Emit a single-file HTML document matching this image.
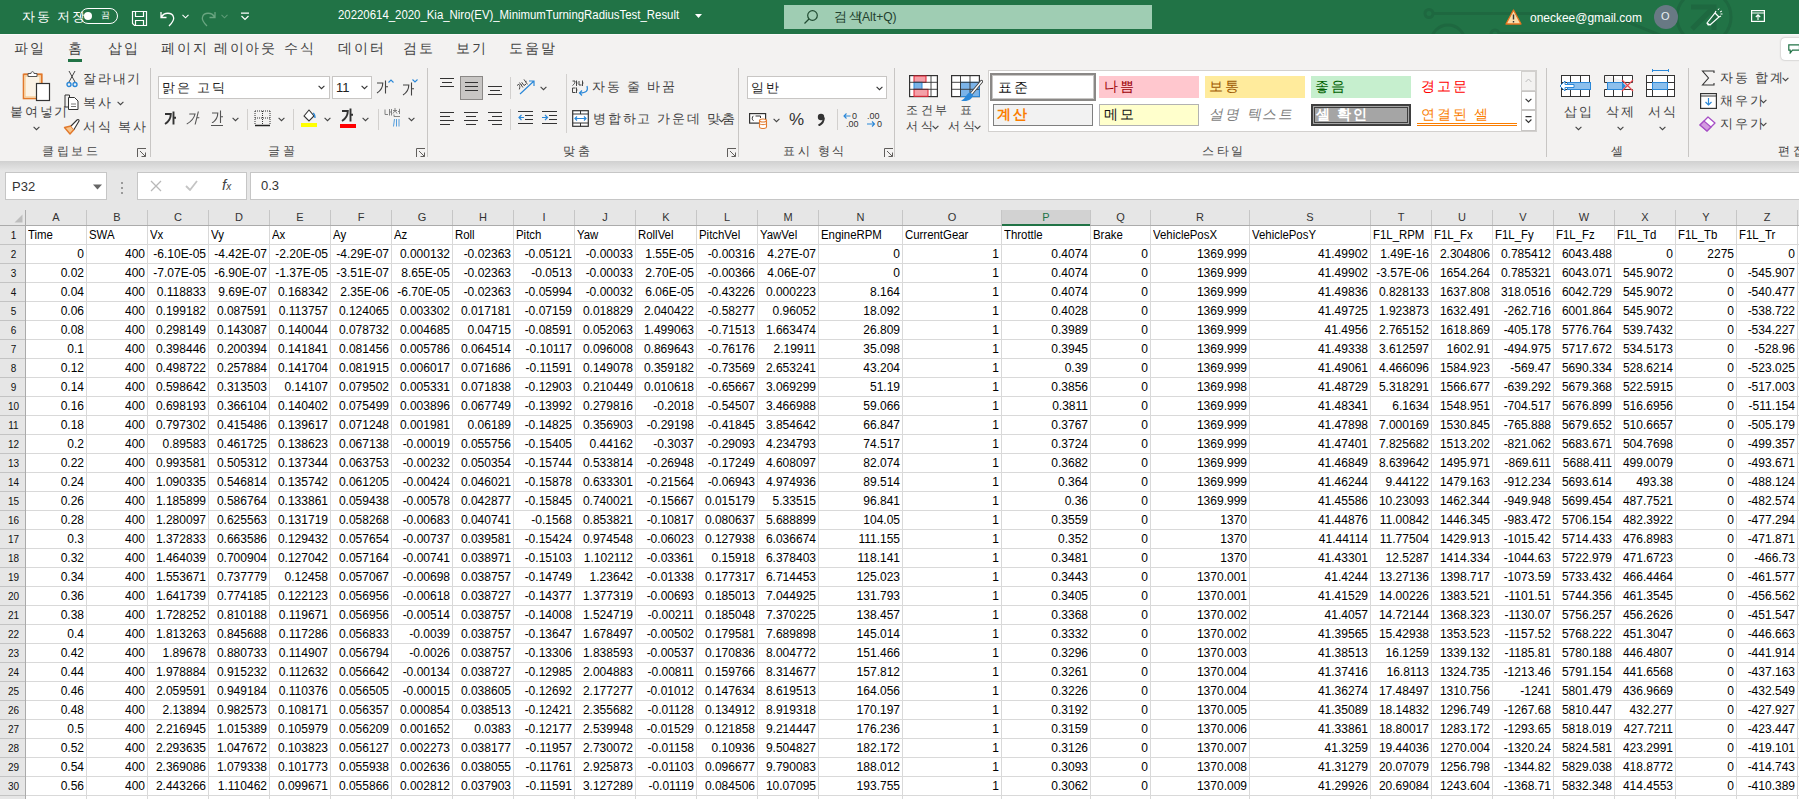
<!DOCTYPE html><html><head><meta charset="utf-8"><style>
*{margin:0;padding:0;box-sizing:border-box}
html,body{width:1799px;height:799px;overflow:hidden;background:#e6e6e6;font-family:"Liberation Sans",sans-serif}
.r{position:absolute}
.t{position:absolute;white-space:nowrap;line-height:1;}
.g{position:absolute;white-space:nowrap;font-size:12px;line-height:18px;height:18px;color:#000;overflow:hidden}
.gr{text-align:right;padding-right:2px}
.gl{text-align:left;padding-left:2px}
</style></head><body><div class="r" style="left:0px;top:0px;width:1799px;height:34px;background:#217346"></div>
<svg class="r" style="left:1400px;top:0px;" width="399" height="34" viewBox="0 0 399 34"><g stroke="#1e6840" stroke-width="3" fill="none">
<circle cx="29" cy="13.5" r="4"/><path d="M33 13.5 H207 L262 36"/>
<circle cx="48" cy="42" r="17"/>
<circle cx="95" cy="34" r="4"/><path d="M99 33.5 H200"/>
<circle cx="304" cy="17" r="27"/>
</g><g stroke="#1e6840" stroke-width="5" fill="none"><path d="M291 7 H314 V30 M292 29 L312 9"/></g></svg>
<div class="t" style="left:22px;top:10px;font-size:13px;color:#fff;letter-spacing:1.75px;">자동 저장</div>
<div class="r" style="left:80px;top:8px;width:38px;height:16px;border:1px solid #fff;border-radius:8px"></div>
<div class="r" style="left:84px;top:12px;width:8px;height:8px;background:#fff;border-radius:50%"></div>
<div class="t" style="left:101px;top:11px;font-size:9px;color:#fff;letter-spacing:2.5px;">끔</div>
<svg class="r" style="left:131px;top:10px;" width="17" height="17" viewBox="0 0 17 17"><path d="M1.5 1.5 H15.5 V15.5 H3.5 L1.5 13.5 Z M4.5 1.5 V6.5 H12.5 V1.5 M4.5 15.5 V10.5 H12.5 V15.5" fill="none" stroke="#fff" stroke-width="1.2"/></svg>
<svg class="r" style="left:159px;top:9px;" width="18" height="18" viewBox="0 0 18 18"><path d="M2 3 V8.5 H7.5 M2.5 8 C5 3 13 3 14.5 8 C15.5 11 13 14 10 17" fill="none" stroke="#fff" stroke-width="1.3"/></svg>
<svg class="r" style="left:182px;top:14px;" width="7" height="5" viewBox="0 0 7 5"><path d="M0.5 0.8 L3.5 3.8 L6.5 0.8" fill="none" stroke="#fff" stroke-width="1.1"/></svg>
<svg class="r" style="left:199px;top:9px;" width="18" height="18" viewBox="0 0 18 18"><path d="M16 3 V8.5 H10.5 M15.5 8 C13 3 5 3 3.5 8 C2.5 11 5 14 8 17" fill="none" stroke="#6aa581" stroke-width="1.3"/></svg>
<svg class="r" style="left:221px;top:14px;" width="7" height="5" viewBox="0 0 7 5"><path d="M0.5 0.8 L3.5 3.8 L6.5 0.8" fill="none" stroke="#5d9b76" stroke-width="1.1"/></svg>
<svg class="r" style="left:240px;top:12px;" width="10" height="9" viewBox="0 0 10 9"><path d="M1 1.2 H9 M1.5 4 L5 7.5 L8.5 4" fill="none" stroke="#fff" stroke-width="1.2"/></svg>
<div class="t" style="left:338px;top:9px;font-size:12.5px;color:#fff;transform:scaleX(0.912);transform-origin:0 0;">20220614_2020_Kia_Niro(EV)_MinimumTurningRadiusTest_Result</div>
<svg class="r" style="left:695px;top:14px;" width="8" height="5" viewBox="0 0 8 5"><path d="M0 0 H7 L3.5 4 Z" fill="#fff"/></svg>
<div class="r" style="left:784px;top:5px;width:368px;height:24px;background:#9fcdb3"></div>
<svg class="r" style="left:803px;top:9px;" width="16" height="16" viewBox="0 0 16 16"><circle cx="9.5" cy="6.5" r="4.8" fill="none" stroke="#1f4a30" stroke-width="1.2"/><path d="M6 10 L1.5 14.5" stroke="#1f4a30" stroke-width="1.3"/></svg>
<div class="t" style="left:834px;top:10px;font-size:13px;color:#23412f;letter-spacing:1.75px;">검색</div>
<div class="t" style="left:858px;top:10px;font-size:13px;color:#23412f;transform:scaleX(0.93);transform-origin:0 0;">(Alt+Q)</div>
<svg class="r" style="left:1505px;top:9px;" width="17" height="16" viewBox="0 0 17 16"><path d="M8.5 1 L16 15 H1 Z" fill="#fbdca8" stroke="#e8741f" stroke-width="1.3" stroke-linejoin="round"/><path d="M8.5 5.5 V10.5 M8.5 12 V13.5" stroke="#333" stroke-width="1.4"/></svg>
<div class="t" style="left:1530px;top:11px;font-size:13px;color:#fff;transform:scaleX(0.921);transform-origin:0 0;">oneckee@gmail.com</div>
<div class="r" style="left:1654px;top:5px;width:24px;height:24px;background:#687984;border-radius:50%"></div>
<div class="t" style="left:1661px;top:11px;font-size:11px;color:#e8eef2;">O</div>
<svg class="r" style="left:1704px;top:8px;" width="20" height="20" viewBox="0 0 20 20"><path d="M3 15 L11 5 L15 9 L6 17 Z M4.5 17.5 L3 15 M11 5 L12 3 M15 9 L17 8" fill="none" stroke="#fff" stroke-width="1.2"/><path d="M14 2 L15 0.5 M16 4 L18 3 M16.5 6 L18.5 6" stroke="#fff" stroke-width="1"/></svg>
<svg class="r" style="left:1751px;top:10px;" width="14" height="12" viewBox="0 0 14 12"><rect x="0.6" y="0.6" width="12.8" height="10.8" fill="none" stroke="#fff" stroke-width="1.2"/><path d="M0.6 3 H13.4 M7 10 V5 M4.8 7 L7 4.8 L9.2 7" fill="none" stroke="#fff" stroke-width="1.1"/></svg>
<div class="r" style="left:0px;top:34px;width:1799px;height:127px;background:#f3f2f1"></div>
<div class="r" style="left:0px;top:34px;width:1799px;height:1px;background:#fbfafa"></div>
<div class="t" style="left:14px;top:41px;font-size:14px;color:#444;letter-spacing:1.75px;">파일</div>
<div class="t" style="left:68px;top:41px;font-size:14px;color:#444;letter-spacing:1.75px;">홈</div>
<div class="t" style="left:108px;top:41px;font-size:14px;color:#444;letter-spacing:1.75px;">삽입</div>
<div class="t" style="left:161px;top:41px;font-size:14px;color:#444;letter-spacing:1.75px;">페이지 레이아웃</div>
<div class="t" style="left:284px;top:41px;font-size:14px;color:#444;letter-spacing:1.75px;">수식</div>
<div class="t" style="left:338px;top:41px;font-size:14px;color:#444;letter-spacing:1.75px;">데이터</div>
<div class="t" style="left:403px;top:41px;font-size:14px;color:#444;letter-spacing:1.75px;">검토</div>
<div class="t" style="left:456px;top:41px;font-size:14px;color:#444;letter-spacing:1.75px;">보기</div>
<div class="t" style="left:509px;top:41px;font-size:14px;color:#444;letter-spacing:1.75px;">도움말</div>
<div class="r" style="left:68px;top:59px;width:14px;height:3px;background:#217346"></div>
<div class="r" style="left:1781px;top:38px;width:30px;height:22px;background:#fff;border-radius:4px;box-shadow:0 0 2px rgba(0,0,0,.35)"></div>
<svg class="r" style="left:1788px;top:44px;" width="12" height="10" viewBox="0 0 12 10"><path d="M0.8 0.8 H11.5 V6.2 H4.5 L2.2 9 V6.2 H0.8 Z" fill="none" stroke="#217346" stroke-width="1.2"/></svg>
<div class="r" style="left:150px;top:68px;width:1px;height:89px;background:#c8c6c4"></div>
<div class="r" style="left:427px;top:68px;width:1px;height:89px;background:#c8c6c4"></div>
<div class="r" style="left:738px;top:68px;width:1px;height:89px;background:#c8c6c4"></div>
<div class="r" style="left:894px;top:68px;width:1px;height:89px;background:#c8c6c4"></div>
<div class="r" style="left:1546px;top:68px;width:1px;height:89px;background:#c8c6c4"></div>
<div class="r" style="left:1688px;top:68px;width:1px;height:89px;background:#c8c6c4"></div>
<div class="t" style="left:42px;top:145px;font-size:12px;color:#444;letter-spacing:2.5px;">클립보드</div>
<div class="t" style="left:268px;top:145px;font-size:12px;color:#444;letter-spacing:2.5px;">글꼴</div>
<div class="t" style="left:563px;top:145px;font-size:12px;color:#444;letter-spacing:2.5px;">맞춤</div>
<div class="t" style="left:783px;top:145px;font-size:12px;color:#444;letter-spacing:2.5px;">표시 형식</div>
<div class="t" style="left:1202px;top:145px;font-size:12px;color:#444;letter-spacing:2.5px;">스타일</div>
<div class="t" style="left:1611px;top:145px;font-size:12px;color:#444;letter-spacing:2.5px;">셀</div>
<div class="t" style="left:1778px;top:145px;font-size:12px;color:#444;letter-spacing:2.5px;">편집</div>
<svg class="r" style="left:137px;top:148px;" width="10" height="10" viewBox="0 0 10 10"><path d="M0.5 9 V0.5 H9 M3 3 L8.5 8.5 M4.5 8.5 H8.5 V4.5" fill="none" stroke="#605e5c" stroke-width="1"/></svg>
<svg class="r" style="left:416px;top:148px;" width="10" height="10" viewBox="0 0 10 10"><path d="M0.5 9 V0.5 H9 M3 3 L8.5 8.5 M4.5 8.5 H8.5 V4.5" fill="none" stroke="#605e5c" stroke-width="1"/></svg>
<svg class="r" style="left:727px;top:148px;" width="10" height="10" viewBox="0 0 10 10"><path d="M0.5 9 V0.5 H9 M3 3 L8.5 8.5 M4.5 8.5 H8.5 V4.5" fill="none" stroke="#605e5c" stroke-width="1"/></svg>
<svg class="r" style="left:884px;top:148px;" width="10" height="10" viewBox="0 0 10 10"><path d="M0.5 9 V0.5 H9 M3 3 L8.5 8.5 M4.5 8.5 H8.5 V4.5" fill="none" stroke="#605e5c" stroke-width="1"/></svg>
<svg class="r" style="left:20px;top:70px;" width="34" height="33" viewBox="0 0 34 33"><path d="M3.5 4.5 H8 M17 4.5 H21.5 V13" fill="none" stroke="#e1792c" stroke-width="2"/>
<rect x="3.5" y="4.5" width="18" height="24" fill="#fff" stroke="#e1792c" stroke-width="1.6"/>
<rect x="5" y="6" width="15" height="21" fill="#fbf3e6" stroke="#f5c27d" stroke-width="1"/>
<path d="M8 6.5 V3.5 H11 C11 1 14 1 14 3.5 H17 V6.5 Z" fill="#fff" stroke="#555" stroke-width="1"/>
<rect x="16.5" y="13.5" width="13" height="17" fill="#fff" stroke="#333" stroke-width="1.2"/></svg>
<div class="t" style="left:10px;top:105px;font-size:13px;color:#444;letter-spacing:1.75px;">붙여넣기</div>
<svg class="r" style="left:33px;top:126px;" width="7" height="5" viewBox="0 0 7 5"><path d="M0.6 0.8 L3.5 3.7 L6.4 0.8" fill="none" stroke="#444" stroke-width="1.1"/></svg>
<svg class="r" style="left:66px;top:70px;" width="12" height="18" viewBox="0 0 12 18"><path d="M3 1 L9 12 M9 1 L3 12" stroke="#444" stroke-width="1"/><circle cx="3" cy="14.5" r="2" fill="none" stroke="#2b88d8" stroke-width="1.4"/><circle cx="9" cy="14.5" r="2" fill="none" stroke="#2b88d8" stroke-width="1.4"/></svg>
<div class="t" style="left:83px;top:72px;font-size:13px;color:#444;letter-spacing:1.75px;">잘라내기</div>
<svg class="r" style="left:63px;top:94px;" width="17" height="17" viewBox="0 0 17 17"><path d="M6.5 3 V1 H2 V13 H5" fill="none" stroke="#333" stroke-width="1"/><path d="M5.5 3.5 H11.5 L15 7 V15.5 H5.5 Z" fill="#fff" stroke="#333" stroke-width="1"/><path d="M8 10 H13 M8 12.5 H13" stroke="#555" stroke-width="0.8"/></svg>
<div class="t" style="left:83px;top:96px;font-size:13px;color:#444;letter-spacing:1.75px;">복사</div>
<svg class="r" style="left:117px;top:101px;" width="7" height="5" viewBox="0 0 7 5"><path d="M0.6 0.8 L3.5 3.7 L6.4 0.8" fill="none" stroke="#444" stroke-width="1.1"/></svg>
<svg class="r" style="left:63px;top:118px;" width="18" height="17" viewBox="0 0 18 17"><path d="M1.5 9.5 L8 8 L11 11.5 L7 16 Z" fill="#f8c58c" stroke="#e1792c" stroke-width="1.4" stroke-linejoin="round"/><path d="M8 8 L14 2 C15 1 16.5 2 16 3 L11 11.5" fill="#fff" stroke="#333" stroke-width="1.1"/></svg>
<div class="t" style="left:83px;top:120px;font-size:13px;color:#444;letter-spacing:1.75px;">서식 복사</div>
<div class="r" style="left:158px;top:76px;width:172px;height:23px;background:#fff;border:1px solid #c8c6c4"></div>
<div class="t" style="left:162px;top:81px;font-size:13px;color:#222;letter-spacing:1.75px;">맑은 고딕</div>
<svg class="r" style="left:318px;top:85px;" width="7" height="5" viewBox="0 0 7 5"><path d="M0.6 0.8 L3.5 3.7 L6.4 0.8" fill="none" stroke="#333" stroke-width="1.1"/></svg>
<div class="r" style="left:332px;top:76px;width:40px;height:23px;background:#fff;border:1px solid #c8c6c4"></div>
<div class="t" style="left:336px;top:81px;font-size:13px;color:#222;">11</div>
<svg class="r" style="left:361px;top:85px;" width="7" height="5" viewBox="0 0 7 5"><path d="M0.6 0.8 L3.5 3.7 L6.4 0.8" fill="none" stroke="#333" stroke-width="1.1"/></svg>
<svg class="r" style="left:376px;top:80px;" width="12" height="14" viewBox="0 0 12 14"><g fill="none" stroke="#444" stroke-width="1.1"><path d="M1 3 H6.8 C6.8 7.5 5 10.5 1 13"/><path d="M9.5 0.5 V13.5 M9.5 6.8 H12"/></g></svg>
<svg class="r" style="left:388px;top:79px;" width="6" height="4" viewBox="0 0 6 4"><path d="M0.5 3.5 L3 1 L5.5 3.5" fill="none" stroke="#2b88d8" stroke-width="1.1"/></svg>
<svg class="r" style="left:402px;top:82px;" width="12" height="14" viewBox="0 0 12 14"><g fill="none" stroke="#444" stroke-width="1.1"><path d="M1 3 H6.8 C6.8 7.5 5 10.5 1 13"/><path d="M9.5 0.5 V13.5 M9.5 6.8 H12"/></g></svg>
<svg class="r" style="left:412px;top:79px;" width="6" height="4" viewBox="0 0 6 4"><path d="M0.5 0.5 L3 3 L5.5 0.5" fill="none" stroke="#2b88d8" stroke-width="1.1"/></svg>
<svg class="r" style="left:164px;top:111px;" width="12" height="14" viewBox="0 0 12 14"><g fill="none" stroke="#333" stroke-width="1.9"><path d="M1 3 H6.8 C6.8 7.5 5 10.5 1 13"/><path d="M9.5 0.5 V13.5 M9.5 6.8 H12"/></g></svg>
<svg class="r" style="left:186px;top:111px;" width="14" height="14" viewBox="0 0 14 14"><g fill="none" stroke="#555" stroke-width="1.1" transform="skewX(-14) translate(3 0)"><path d="M1 3 H6.8 C6.8 7.5 5 10.5 1 13"/><path d="M9.5 0.5 V13.5 M9.5 6.8 H12"/></g></svg>
<svg class="r" style="left:211px;top:110px;" width="12" height="13" viewBox="0 0 12 13"><g fill="none" stroke="#555" stroke-width="1.1"><path d="M1 3 H6.8 C6.8 7.5 5 10.5 1 13"/><path d="M9.5 0.5 V13.5 M9.5 6.8 H12"/></g></svg>
<div class="r" style="left:211px;top:125px;width:12px;height:1px;background:#555"></div>
<svg class="r" style="left:232px;top:117px;" width="7" height="5" viewBox="0 0 7 5"><path d="M0.6 0.8 L3.5 3.7 L6.4 0.8" fill="none" stroke="#444" stroke-width="1.1"/></svg>
<div class="r" style="left:247px;top:109px;width:1px;height:21px;background:#d2d0ce"></div>
<svg class="r" style="left:254px;top:110px;" width="17" height="17" viewBox="0 0 17 17"><path d="M1 1 H16 M1 1 V15 M16 1 V15 M8.5 1 V15 M1 8 H16" fill="none" stroke="#333" stroke-width="1" stroke-dasharray="1 1"/><path d="M1 15.5 H16" stroke="#222" stroke-width="1.5"/></svg>
<svg class="r" style="left:278px;top:117px;" width="7" height="5" viewBox="0 0 7 5"><path d="M0.6 0.8 L3.5 3.7 L6.4 0.8" fill="none" stroke="#444" stroke-width="1.1"/></svg>
<div class="r" style="left:293px;top:109px;width:1px;height:21px;background:#d2d0ce"></div>
<svg class="r" style="left:300px;top:107px;" width="18" height="21" viewBox="0 0 18 21"><path d="M4 9 L9 3 L14 9 L9 14 Z" fill="#fff" stroke="#333" stroke-width="1.1"/><path d="M13 6 C15 7 15 9 15 11" fill="none" stroke="#2b88d8" stroke-width="1.3"/><rect x="1" y="16" width="16" height="4" fill="#ffff00"/></svg>
<svg class="r" style="left:324px;top:117px;" width="7" height="5" viewBox="0 0 7 5"><path d="M0.6 0.8 L3.5 3.7 L6.4 0.8" fill="none" stroke="#444" stroke-width="1.1"/></svg>
<svg class="r" style="left:341px;top:108px;" width="14" height="15" viewBox="0 0 14 15"><g fill="none" stroke="#333" stroke-width="1.9"><path d="M1 3 H6.8 C6.8 7.5 5 10.5 1 13"/><path d="M9.5 0.5 V13.5 M9.5 6.8 H12"/></g></svg>
<div class="r" style="left:340px;top:124px;width:16px;height:4px;background:#ff0000"></div>
<svg class="r" style="left:362px;top:117px;" width="7" height="5" viewBox="0 0 7 5"><path d="M0.6 0.8 L3.5 3.7 L6.4 0.8" fill="none" stroke="#444" stroke-width="1.1"/></svg>
<div class="r" style="left:378px;top:109px;width:1px;height:21px;background:#d2d0ce"></div>
<svg class="r" style="left:384px;top:108px;" width="18" height="20" viewBox="0 0 18 20"><g fill="none" stroke="#777" stroke-width="0.9"><path d="M1 1.5 V6.5 H4 M5.5 1 V7.5 M7.5 1 V7.5 M5.5 4 H7.5"/><path d="M10 1 H12 M9 2.5 H13 M11 2.5 L9 5.5 M11 2.5 L13 5.5 M15.5 0.8 V6 M14 3.5 H15.5 M10 6.5 V8.5 H16"/></g><path d="M10.5 11 L9.5 18.5 M12.5 11 V18.5 M15 11 V18.5" fill="none" stroke="#2b88d8" stroke-width="0.8"/></svg>
<svg class="r" style="left:408px;top:117px;" width="7" height="5" viewBox="0 0 7 5"><path d="M0.6 0.8 L3.5 3.7 L6.4 0.8" fill="none" stroke="#444" stroke-width="1.1"/></svg>
<svg class="r" style="left:440px;top:78px;" width="16" height="16" viewBox="0 0 16 16"><rect x="0" y="0" width="14" height="1" fill="#333"/><rect x="2" y="4" width="10" height="1" fill="#333"/><rect x="0" y="8" width="14" height="1" fill="#333"/></svg>
<div class="r" style="left:460px;top:76px;width:23px;height:24px;background:#c8c6c4;border:1px solid #8a8886"></div>
<svg class="r" style="left:465px;top:82px;" width="16" height="16" viewBox="0 0 16 16"><rect x="0" y="0" width="13" height="1" fill="#333"/><rect x="0" y="4" width="13" height="1" fill="#333"/><rect x="0" y="8" width="13" height="1" fill="#333"/></svg>
<svg class="r" style="left:488px;top:86px;" width="16" height="16" viewBox="0 0 16 16"><rect x="0" y="0" width="14" height="1" fill="#333"/><rect x="2" y="4" width="10" height="1" fill="#333"/><rect x="0" y="8" width="14" height="1" fill="#333"/></svg>
<div class="r" style="left:510px;top:77px;width:1px;height:22px;background:#d2d0ce"></div>
<svg class="r" style="left:517px;top:78px;" width="20" height="18" viewBox="0 0 20 18"><g transform="rotate(-35 6 7)" fill="none" stroke="#444" stroke-width="0.9"><path d="M0.5 4 H3 C3 6 2.5 7 0.5 8.5 M4.5 3 V9 M4.5 6 H5.5 M6.5 4 V8 H9 M10 3 V9 M10 6 H11"/></g><path d="M3 16 L17 3 M12 3 H17 V8" fill="none" stroke="#2b88d8" stroke-width="1.2"/></svg>
<svg class="r" style="left:540px;top:86px;" width="7" height="5" viewBox="0 0 7 5"><path d="M0.6 0.8 L3.5 3.7 L6.4 0.8" fill="none" stroke="#444" stroke-width="1.1"/></svg>
<div class="r" style="left:566px;top:74px;width:1px;height:59px;background:#d2d0ce"></div>
<svg class="r" style="left:440px;top:112px;" width="16" height="16" viewBox="0 0 16 16"><rect x="0" y="0" width="14" height="1" fill="#333"/><rect x="0" y="4" width="10" height="1" fill="#333"/><rect x="0" y="8" width="14" height="1" fill="#333"/><rect x="0" y="12" width="10" height="1" fill="#333"/></svg>
<svg class="r" style="left:464px;top:112px;" width="16" height="16" viewBox="0 0 16 16"><rect x="0" y="0" width="14" height="1" fill="#333"/><rect x="2" y="4" width="10" height="1" fill="#333"/><rect x="0" y="8" width="14" height="1" fill="#333"/><rect x="2" y="12" width="10" height="1" fill="#333"/></svg>
<svg class="r" style="left:488px;top:112px;" width="16" height="16" viewBox="0 0 16 16"><rect x="0" y="0" width="14" height="1" fill="#333"/><rect x="4" y="4" width="10" height="1" fill="#333"/><rect x="0" y="8" width="14" height="1" fill="#333"/><rect x="4" y="12" width="10" height="1" fill="#333"/></svg>
<div class="r" style="left:510px;top:109px;width:1px;height:21px;background:#d2d0ce"></div>
<svg class="r" style="left:518px;top:111px;" width="16" height="15" viewBox="0 0 16 15"><path d="M0 0.5 H15 M7 4.5 H15 M7 8.5 H15 M0 12.5 H15" stroke="#333" stroke-width="1"/><path d="M6 6.5 H1 M3.5 4 L1 6.5 L3.5 9" fill="none" stroke="#2b88d8" stroke-width="1.2"/></svg>
<svg class="r" style="left:542px;top:111px;" width="16" height="15" viewBox="0 0 16 15"><path d="M0 0.5 H15 M7 4.5 H15 M7 8.5 H15 M0 12.5 H15" stroke="#333" stroke-width="1"/><path d="M0 6.5 H5.5 M3 4 L5.5 6.5 L3 9" fill="none" stroke="#2b88d8" stroke-width="1.2"/></svg>
<svg class="r" style="left:572px;top:80px;" width="18" height="16" viewBox="0 0 18 16"><g fill="none" stroke="#333" stroke-width="0.9"><path d="M0.5 1 H3 C3 3 2.5 4 0.5 5.5 M4.5 0.5 V6 M4.5 3 H5.5 M7 1 V5 H9.5 M10.5 0.5 V6 M10.5 3 H11.5 M3.5 8 H0.5 V12.5 H3.5 M4.5 7.5 V13 M4.5 10 H5.5"/></g><path d="M15 6 C16.5 11 14 13 8 13 M10 10.5 L7.5 13 L10 15.5" fill="none" stroke="#2b88d8" stroke-width="1.2"/></svg>
<div class="t" style="left:592px;top:80px;font-size:13px;color:#444;letter-spacing:1.75px;">자동 줄 바꿈</div>
<svg class="r" style="left:572px;top:110px;" width="17" height="17" viewBox="0 0 17 17"><rect x="0.7" y="0.7" width="15.6" height="15.6" fill="#fff" stroke="#333" stroke-width="1.2"/><path d="M0.7 4 H16.3 M0.7 13 H16.3 M8.5 13 V16.3 M8.5 0.7 V4" stroke="#333" stroke-width="1"/><path d="M3 8.5 H14 M5 6.5 L3 8.5 L5 10.5 M12 6.5 L14 8.5 L12 10.5" fill="none" stroke="#2b88d8" stroke-width="1.2"/></svg>
<div class="t" style="left:593px;top:112px;font-size:13px;color:#444;letter-spacing:1.75px;">병합하고 가운데 맞춤</div>
<svg class="r" style="left:718px;top:118px;" width="7" height="5" viewBox="0 0 7 5"><path d="M0.6 0.8 L3.5 3.7 L6.4 0.8" fill="none" stroke="#444" stroke-width="1.1"/></svg>
<div class="r" style="left:747px;top:76px;width:140px;height:23px;background:#fff;border:1px solid #c8c6c4"></div>
<div class="t" style="left:751px;top:81px;font-size:13px;color:#222;letter-spacing:1.75px;">일반</div>
<svg class="r" style="left:876px;top:86px;" width="7" height="5" viewBox="0 0 7 5"><path d="M0.6 0.8 L3.5 3.7 L6.4 0.8" fill="none" stroke="#333" stroke-width="1.1"/></svg>
<svg class="r" style="left:749px;top:113px;" width="19" height="16" viewBox="0 0 19 16"><rect x="0.6" y="0.6" width="16" height="9.5" fill="#fff" stroke="#333" stroke-width="1.2"/><path d="M4.5 2.8 C2.8 3.8 2.8 6.8 4.5 7.8 M6.5 3 H11.5 V5" fill="none" stroke="#333" stroke-width="1"/><path d="M10.5 7.5 V14 C10.5 16 17.5 16 17.5 14 V7.5 Z" fill="#fff" stroke="#e1792c" stroke-width="1.1"/><ellipse cx="14" cy="7.5" rx="3.5" ry="1.5" fill="#fff" stroke="#e1792c" stroke-width="1.1"/><path d="M10.5 10.5 C10.5 12 17.5 12 17.5 10.5" fill="none" stroke="#e1792c" stroke-width="1"/></svg>
<svg class="r" style="left:773px;top:118px;" width="7" height="5" viewBox="0 0 7 5"><path d="M0.6 0.8 L3.5 3.7 L6.4 0.8" fill="none" stroke="#444" stroke-width="1.1"/></svg>
<div class="t" style="left:789px;top:111px;font-size:17px;color:#333;">%</div>
<svg class="r" style="left:816px;top:113px;" width="10" height="13" viewBox="0 0 10 13"><circle cx="5" cy="4" r="3.2" fill="#333"/><path d="M7.8 4.5 C8 8 6 11 2.5 12.5" fill="none" stroke="#333" stroke-width="2"/></svg>
<div class="r" style="left:837px;top:109px;width:1px;height:21px;background:#d2d0ce"></div>
<div class="t" style="left:852px;top:112px;font-size:9px;color:#333;">0</div>
<div class="t" style="left:846px;top:120px;font-size:9px;color:#333;">.00</div>
<svg class="r" style="left:843px;top:113px;" width="8" height="6" viewBox="0 0 8 6"><path d="M7.5 3 H1 M3.5 0.5 L1 3 L3.5 5.5" fill="none" stroke="#2b88d8" stroke-width="1.1"/></svg>
<div class="t" style="left:867px;top:112px;font-size:9px;color:#333;">.00</div>
<div class="t" style="left:877px;top:120px;font-size:9px;color:#333;">0</div>
<svg class="r" style="left:867px;top:121px;" width="9" height="6" viewBox="0 0 9 6"><path d="M0 3 H7.5 M5 0.5 L7.5 3 L5 5.5" fill="none" stroke="#2b88d8" stroke-width="1.1"/></svg>
<svg class="r" style="left:909px;top:75px;" width="30" height="23" viewBox="0 0 30 23"><rect x="0.6" y="0.6" width="27.8" height="21" fill="#fff" stroke="#333" stroke-width="1.2"/>
<rect x="5" y="1" width="12" height="6.3" fill="#f4a0a8" stroke="#e02030" stroke-width="1"/>
<rect x="5" y="7.3" width="8" height="7" fill="#7ab3e8" stroke="#2b88d8" stroke-width="1"/>
<rect x="5" y="14.3" width="14" height="7" fill="#f4a0a8" stroke="#e02030" stroke-width="1"/>
<path d="M0.6 7.3 H28.4 M0.6 14.3 H28.4 M22 0.6 V21.6" stroke="#333" stroke-width="0.9"/></svg>
<div class="t" style="left:906px;top:104px;font-size:12px;color:#444;letter-spacing:2.5px;">조건부</div>
<div class="t" style="left:906px;top:120px;font-size:12px;color:#444;letter-spacing:2.5px;">서식</div>
<svg class="r" style="left:932px;top:125px;" width="7" height="5" viewBox="0 0 7 5"><path d="M0.6 0.8 L3.5 3.7 L6.4 0.8" fill="none" stroke="#444" stroke-width="1.1"/></svg>
<svg class="r" style="left:951px;top:75px;" width="32" height="27" viewBox="0 0 32 27"><rect x="0.6" y="0.6" width="27.8" height="21" fill="#fff" stroke="#333" stroke-width="1.2"/>
<rect x="9.5" y="7.3" width="18.9" height="14.3" fill="#7ab3e8" stroke="#2b88d8" stroke-width="1"/>
<path d="M0.6 7.3 H28.4 M0.6 14.3 H28.4 M9.5 0.6 V21.6 M19 0.6 V21.6" stroke="#333" stroke-width="0.9"/>
<path d="M30.5 6.5 L20.5 18.5" stroke="#444" stroke-width="3.2" stroke-linecap="round"/><path d="M30.5 6.5 L20.5 18.5" stroke="#fff" stroke-width="1.4" stroke-linecap="round"/><path d="M19 17.5 C15 18.5 15 24 10 25.5 C16 27.5 22 24 22 19.5 Z" fill="#2b88d8"/></svg>
<div class="t" style="left:960px;top:104px;font-size:12px;color:#444;letter-spacing:2.5px;">표</div>
<div class="t" style="left:948px;top:120px;font-size:12px;color:#444;letter-spacing:2.5px;">서식</div>
<svg class="r" style="left:974px;top:125px;" width="7" height="5" viewBox="0 0 7 5"><path d="M0.6 0.8 L3.5 3.7 L6.4 0.8" fill="none" stroke="#444" stroke-width="1.1"/></svg>
<div class="r" style="left:988px;top:70px;width:549px;height:62px;background:#fff;border:1px solid #d2d0ce"></div>
<div class="r" style="left:990px;top:73px;width:106px;height:28px;border:2px solid #8a8886;background:#fff"></div>
<div class="r" style="left:992px;top:75px;width:102px;height:24px;border:1px solid #c8c6c4"></div>
<div class="t" style="left:998px;top:80px;font-size:14px;color:#111;letter-spacing:1.75px;">표준</div>
<div class="r" style="left:1099px;top:76px;width:100px;height:22px;background:#ffc7ce"></div>
<div class="t" style="left:1104px;top:79px;font-size:14px;color:#9c0006;letter-spacing:1.75px;">나쁨</div>
<div class="r" style="left:1205px;top:76px;width:100px;height:22px;background:#ffeb9c"></div>
<div class="t" style="left:1209px;top:79px;font-size:14px;color:#9c5700;letter-spacing:1.75px;">보통</div>
<div class="r" style="left:1311px;top:76px;width:100px;height:22px;background:#c6efce"></div>
<div class="t" style="left:1315px;top:79px;font-size:14px;color:#006100;letter-spacing:1.75px;">좋음</div>
<div class="t" style="left:1421px;top:79px;font-size:14px;color:#ff0000;letter-spacing:1.75px;">경고문</div>
<div class="r" style="left:993px;top:104px;width:100px;height:22px;background:#f2f2f2;border:1px solid #7f7f7f"></div>
<div class="t" style="left:997px;top:107px;font-size:14px;color:#fa7d00;letter-spacing:1.75px;font-weight:bold">계산</div>
<div class="r" style="left:1099px;top:104px;width:100px;height:22px;background:#ffffcc;border:1px solid #b2b2b2"></div>
<div class="t" style="left:1104px;top:107px;font-size:14px;color:#111;letter-spacing:1.75px;">메모</div>
<div class="t" style="left:1209px;top:107px;font-size:14px;color:#7f7f7f;letter-spacing:1.75px;transform:skewX(-12deg);transform-origin:0 100%">설명 텍스트</div>
<div class="r" style="left:1311px;top:104px;width:100px;height:22px;background:#a5a5a5;border:2px solid #3f3f3f;box-shadow:inset 0 0 0 1px #a5a5a5, inset 0 0 0 2px #3f3f3f"></div>
<div class="t" style="left:1316px;top:107px;font-size:14px;color:#fff;letter-spacing:1.75px;font-weight:bold">셀 확인</div>
<div class="t" style="left:1421px;top:107px;font-size:14px;color:#fa7d00;letter-spacing:1.75px;">연결된 셀</div>
<div class="r" style="left:1417px;top:123px;width:100px;height:1px;background:#fa7d00"></div>
<div class="r" style="left:1417px;top:125px;width:100px;height:1px;background:#fa7d00"></div>
<div class="r" style="left:1521px;top:71px;width:15px;height:20px;border:1px solid #d2d0ce;background:#f3f2f1"></div>
<div class="r" style="left:1521px;top:91px;width:15px;height:19px;border:1px solid #c8c6c4;background:#fff"></div>
<div class="r" style="left:1521px;top:110px;width:15px;height:21px;border:1px solid #c8c6c4;background:#fff"></div>
<svg class="r" style="left:1525px;top:78px;" width="7" height="5" viewBox="0 0 7 5"><path d="M0.6 4 L3.5 1 L6.4 4" fill="none" stroke="#bbb" stroke-width="1"/></svg>
<svg class="r" style="left:1525px;top:98px;" width="7" height="5" viewBox="0 0 7 5"><path d="M0.6 0.8 L3.5 3.7 L6.4 0.8" fill="none" stroke="#333" stroke-width="1.1"/></svg>
<svg class="r" style="left:1525px;top:116px;" width="7" height="8" viewBox="0 0 7 8"><path d="M0.5 0.6 H6.5 M0.6 3.5 L3.5 6.4 L6.4 3.5" fill="none" stroke="#333" stroke-width="1.1"/></svg>
<svg class="r" style="left:1559px;top:74px;" width="34" height="30" viewBox="0 0 34 30"><rect x="2.5" y="1.5" width="28" height="21" fill="#fff" stroke="#333" stroke-width="1"/>
<path d="M2.5 8.5 H30.5 M2.5 15.5 H30.5 M11.5 1.5 V22.5 M21.5 1.5 V22.5" stroke="#333" stroke-width="1"/>
<rect x="8.5" y="8.5" width="23" height="7" fill="#8cbfec" stroke="#2b88d8" stroke-width="1"/>
<path d="M15 10.5 H6 V7 L1 12 L6 17 V13.5 H15 Z" fill="#fff" stroke="#2b88d8" stroke-width="1"/></svg>
<div class="t" style="left:1564px;top:105px;font-size:13px;color:#444;letter-spacing:1.75px;">삽입</div>
<svg class="r" style="left:1575px;top:126px;" width="7" height="5" viewBox="0 0 7 5"><path d="M0.6 0.8 L3.5 3.7 L6.4 0.8" fill="none" stroke="#444" stroke-width="1.1"/></svg>
<svg class="r" style="left:1603px;top:74px;" width="34" height="30" viewBox="0 0 34 30"><path d="M1.5 1.5 H29.5 V8.5 M1.5 1.5 V8.5 M1.5 15.5 V22.5 H29.5 V15.5" fill="#fff" stroke="#333" stroke-width="1"/>
<path d="M1.5 8.5 H29.5 M1.5 15.5 H29.5 M10.5 1.5 V8.5 M19.5 1.5 V8.5 M10.5 15.5 V22.5 M19.5 15.5 V22.5" stroke="#333" stroke-width="1"/>
<rect x="4.5" y="8.5" width="15" height="7" fill="#8cbfec" stroke="#2b88d8" stroke-width="1"/>
<path d="M19.5 8.5 L23 12 L19.5 15.5 Z" fill="#2b88d8"/>
<path d="M19 6 L30 17 M30 6 L19 17" stroke="#e8474f" stroke-width="1.2"/></svg>
<div class="t" style="left:1606px;top:105px;font-size:13px;color:#444;letter-spacing:1.75px;">삭제</div>
<svg class="r" style="left:1617px;top:126px;" width="7" height="5" viewBox="0 0 7 5"><path d="M0.6 0.8 L3.5 3.7 L6.4 0.8" fill="none" stroke="#444" stroke-width="1.1"/></svg>
<svg class="r" style="left:1645px;top:69px;" width="34" height="30" viewBox="0 0 34 30"><path d="M7.5 1.5 H23.5 M7.5 0 V3 M23.5 0 V3" stroke="#2b88d8" stroke-width="1"/>
<rect x="1.5" y="6.5" width="28" height="21" fill="#fff" stroke="#333" stroke-width="1"/>
<path d="M1.5 13.5 H29.5 M1.5 20.5 H29.5 M7.5 6.5 V27.5 M22.5 6.5 V27.5" stroke="#333" stroke-width="1"/>
<rect x="7.5" y="13.5" width="15" height="7" fill="#8cbfec" stroke="#2b88d8" stroke-width="1"/></svg>
<div class="t" style="left:1648px;top:105px;font-size:13px;color:#444;letter-spacing:1.75px;">서식</div>
<svg class="r" style="left:1659px;top:126px;" width="7" height="5" viewBox="0 0 7 5"><path d="M0.6 0.8 L3.5 3.7 L6.4 0.8" fill="none" stroke="#444" stroke-width="1.1"/></svg>
<svg class="r" style="left:1701px;top:70px;" width="14" height="16" viewBox="0 0 14 16"><path d="M13 3 V1 H1.5 L7.5 8 L1.5 15 H13 V13" fill="none" stroke="#333" stroke-width="1.1"/></svg>
<div class="t" style="left:1720px;top:71px;font-size:13px;color:#444;letter-spacing:1.75px;">자동 합계</div>
<svg class="r" style="left:1782px;top:77px;" width="7" height="5" viewBox="0 0 7 5"><path d="M0.6 0.8 L3.5 3.7 L6.4 0.8" fill="none" stroke="#444" stroke-width="1.1"/></svg>
<svg class="r" style="left:1700px;top:93px;" width="17" height="16" viewBox="0 0 17 16"><rect x="0.6" y="0.6" width="15.8" height="14.8" fill="#fff" stroke="#333" stroke-width="1.2"/><path d="M0.6 3 H16.4" stroke="#333"/><path d="M8.5 5 V12 M5.5 9 L8.5 12 L11.5 9" fill="none" stroke="#2b88d8" stroke-width="1.2"/></svg>
<div class="t" style="left:1720px;top:94px;font-size:13px;color:#444;letter-spacing:1.75px;">채우기</div>
<svg class="r" style="left:1760px;top:99px;" width="7" height="5" viewBox="0 0 7 5"><path d="M0.6 0.8 L3.5 3.7 L6.4 0.8" fill="none" stroke="#444" stroke-width="1.1"/></svg>
<svg class="r" style="left:1699px;top:116px;" width="18" height="16" viewBox="0 0 18 16"><path d="M1 9 L9 1 L16 7 L8 15 Z" fill="#fff" stroke="#a64ec5" stroke-width="1.3" stroke-linejoin="round"/><path d="M1 9 L5 5 L12 11 L8 15 Z" fill="#d39be0" stroke="#a64ec5" stroke-width="1.2"/></svg>
<div class="t" style="left:1720px;top:117px;font-size:13px;color:#444;letter-spacing:1.75px;">지우기</div>
<svg class="r" style="left:1760px;top:122px;" width="7" height="5" viewBox="0 0 7 5"><path d="M0.6 0.8 L3.5 3.7 L6.4 0.8" fill="none" stroke="#444" stroke-width="1.1"/></svg>
<div class="r" style="left:0px;top:161px;width:1799px;height:10px;background:linear-gradient(#d0d0d0,#e6e6e6)"></div>
<div class="r" style="left:5px;top:172px;width:102px;height:28px;background:#fff;border:1px solid #c6c6c6"></div>
<div class="t" style="left:12px;top:180px;font-size:13px;color:#333;">P32</div>
<svg class="r" style="left:93px;top:184px;" width="9" height="6" viewBox="0 0 9 6"><path d="M0 0.5 H9 L4.5 5.5 Z" fill="#666"/></svg>
<div class="r" style="left:121px;top:182px;width:2px;height:2px;background:#9a9a9a"></div>
<div class="r" style="left:121px;top:187px;width:2px;height:2px;background:#9a9a9a"></div>
<div class="r" style="left:121px;top:192px;width:2px;height:2px;background:#9a9a9a"></div>
<div class="r" style="left:137px;top:172px;width:110px;height:28px;background:#fff;border:1px solid #c6c6c6"></div>
<svg class="r" style="left:150px;top:180px;" width="12" height="12" viewBox="0 0 12 12"><path d="M1 1 L11 11 M11 1 L1 11" stroke="#b8b8b8" stroke-width="1.3"/></svg>
<svg class="r" style="left:185px;top:180px;" width="13" height="11" viewBox="0 0 13 11"><path d="M1 6 L5 10 L12 1" fill="none" stroke="#c4c4c4" stroke-width="1.8"/></svg>
<div class="t" style="left:222px;top:177px;font-size:15px;color:#444;font-family:"Liberation Serif",serif;font-weight:bold"><i>f</i><span style="font-size:10px"><i>x</i></span></div>
<div class="r" style="left:250px;top:172px;width:1549px;height:28px;background:#fff;border:1px solid #c6c6c6;border-right:none"></div>
<div class="t" style="left:261px;top:179px;font-size:13px;color:#333;">0.3</div>
<div class="r" style="left:0px;top:210px;width:1799px;height:15px;background:#e6e6e6"></div>
<svg class="r" style="left:14px;top:214px;" width="9" height="9" viewBox="0 0 9 9"><path d="M8.5 0.5 V8.5 H0.5 Z" fill="#bdbdbd"/></svg>
<div class="r" style="left:1002px;top:210px;width:88px;height:15px;background:#d2d2d2"></div>
<div class="g" style="left:26px;top:209px;width:60px;text-align:center;color:#333;font-size:11px;line-height:17px">A</div>
<div class="r" style="left:86px;top:210px;width:1px;height:15px;background:#c6c6c6"></div>
<div class="g" style="left:87px;top:209px;width:60px;text-align:center;color:#333;font-size:11px;line-height:17px">B</div>
<div class="r" style="left:147px;top:210px;width:1px;height:15px;background:#c6c6c6"></div>
<div class="g" style="left:148px;top:209px;width:60px;text-align:center;color:#333;font-size:11px;line-height:17px">C</div>
<div class="r" style="left:208px;top:210px;width:1px;height:15px;background:#c6c6c6"></div>
<div class="g" style="left:209px;top:209px;width:60px;text-align:center;color:#333;font-size:11px;line-height:17px">D</div>
<div class="r" style="left:269px;top:210px;width:1px;height:15px;background:#c6c6c6"></div>
<div class="g" style="left:270px;top:209px;width:60px;text-align:center;color:#333;font-size:11px;line-height:17px">E</div>
<div class="r" style="left:330px;top:210px;width:1px;height:15px;background:#c6c6c6"></div>
<div class="g" style="left:331px;top:209px;width:60px;text-align:center;color:#333;font-size:11px;line-height:17px">F</div>
<div class="r" style="left:391px;top:210px;width:1px;height:15px;background:#c6c6c6"></div>
<div class="g" style="left:392px;top:209px;width:60px;text-align:center;color:#333;font-size:11px;line-height:17px">G</div>
<div class="r" style="left:452px;top:210px;width:1px;height:15px;background:#c6c6c6"></div>
<div class="g" style="left:453px;top:209px;width:60px;text-align:center;color:#333;font-size:11px;line-height:17px">H</div>
<div class="r" style="left:513px;top:210px;width:1px;height:15px;background:#c6c6c6"></div>
<div class="g" style="left:514px;top:209px;width:60px;text-align:center;color:#333;font-size:11px;line-height:17px">I</div>
<div class="r" style="left:574px;top:210px;width:1px;height:15px;background:#c6c6c6"></div>
<div class="g" style="left:575px;top:209px;width:60px;text-align:center;color:#333;font-size:11px;line-height:17px">J</div>
<div class="r" style="left:635px;top:210px;width:1px;height:15px;background:#c6c6c6"></div>
<div class="g" style="left:636px;top:209px;width:60px;text-align:center;color:#333;font-size:11px;line-height:17px">K</div>
<div class="r" style="left:696px;top:210px;width:1px;height:15px;background:#c6c6c6"></div>
<div class="g" style="left:697px;top:209px;width:60px;text-align:center;color:#333;font-size:11px;line-height:17px">L</div>
<div class="r" style="left:757px;top:210px;width:1px;height:15px;background:#c6c6c6"></div>
<div class="g" style="left:758px;top:209px;width:60px;text-align:center;color:#333;font-size:11px;line-height:17px">M</div>
<div class="r" style="left:818px;top:210px;width:1px;height:15px;background:#c6c6c6"></div>
<div class="g" style="left:819px;top:209px;width:83px;text-align:center;color:#333;font-size:11px;line-height:17px">N</div>
<div class="r" style="left:902px;top:210px;width:1px;height:15px;background:#c6c6c6"></div>
<div class="g" style="left:903px;top:209px;width:98px;text-align:center;color:#333;font-size:11px;line-height:17px">O</div>
<div class="r" style="left:1001px;top:210px;width:1px;height:15px;background:#c6c6c6"></div>
<div class="g" style="left:1002px;top:209px;width:88px;text-align:center;color:#217346;font-size:11px;line-height:17px">P</div>
<div class="r" style="left:1090px;top:210px;width:1px;height:15px;background:#c6c6c6"></div>
<div class="g" style="left:1091px;top:209px;width:59px;text-align:center;color:#333;font-size:11px;line-height:17px">Q</div>
<div class="r" style="left:1150px;top:210px;width:1px;height:15px;background:#c6c6c6"></div>
<div class="g" style="left:1151px;top:209px;width:98px;text-align:center;color:#333;font-size:11px;line-height:17px">R</div>
<div class="r" style="left:1249px;top:210px;width:1px;height:15px;background:#c6c6c6"></div>
<div class="g" style="left:1250px;top:209px;width:120px;text-align:center;color:#333;font-size:11px;line-height:17px">S</div>
<div class="r" style="left:1370px;top:210px;width:1px;height:15px;background:#c6c6c6"></div>
<div class="g" style="left:1371px;top:209px;width:60px;text-align:center;color:#333;font-size:11px;line-height:17px">T</div>
<div class="r" style="left:1431px;top:210px;width:1px;height:15px;background:#c6c6c6"></div>
<div class="g" style="left:1432px;top:209px;width:60px;text-align:center;color:#333;font-size:11px;line-height:17px">U</div>
<div class="r" style="left:1492px;top:210px;width:1px;height:15px;background:#c6c6c6"></div>
<div class="g" style="left:1493px;top:209px;width:60px;text-align:center;color:#333;font-size:11px;line-height:17px">V</div>
<div class="r" style="left:1553px;top:210px;width:1px;height:15px;background:#c6c6c6"></div>
<div class="g" style="left:1554px;top:209px;width:60px;text-align:center;color:#333;font-size:11px;line-height:17px">W</div>
<div class="r" style="left:1614px;top:210px;width:1px;height:15px;background:#c6c6c6"></div>
<div class="g" style="left:1615px;top:209px;width:60px;text-align:center;color:#333;font-size:11px;line-height:17px">X</div>
<div class="r" style="left:1675px;top:210px;width:1px;height:15px;background:#c6c6c6"></div>
<div class="g" style="left:1676px;top:209px;width:60px;text-align:center;color:#333;font-size:11px;line-height:17px">Y</div>
<div class="r" style="left:1736px;top:210px;width:1px;height:15px;background:#c6c6c6"></div>
<div class="g" style="left:1737px;top:209px;width:60px;text-align:center;color:#333;font-size:11px;line-height:17px">Z</div>
<div class="r" style="left:1797px;top:210px;width:1px;height:15px;background:#c6c6c6"></div>
<div class="r" style="left:25px;top:210px;width:1px;height:15px;background:#ababab"></div>
<div class="r" style="left:0px;top:225px;width:1799px;height:1px;background:#ababab"></div>
<div class="r" style="left:1002px;top:224px;width:88px;height:2px;background:#217346"></div>
<div class="r" style="left:0px;top:226px;width:25px;height:573px;background:#e6e6e6"></div>
<div class="r" style="left:25px;top:210px;width:1px;height:589px;background:#ababab"></div>
<div class="r" style="left:26px;top:226px;width:1773px;height:573px;background:#fff"></div>
<div class="r" style="left:86px;top:226px;width:1px;height:573px;background:#d9d9d9"></div>
<div class="r" style="left:147px;top:226px;width:1px;height:573px;background:#d9d9d9"></div>
<div class="r" style="left:208px;top:226px;width:1px;height:573px;background:#d9d9d9"></div>
<div class="r" style="left:269px;top:226px;width:1px;height:573px;background:#d9d9d9"></div>
<div class="r" style="left:330px;top:226px;width:1px;height:573px;background:#d9d9d9"></div>
<div class="r" style="left:391px;top:226px;width:1px;height:573px;background:#d9d9d9"></div>
<div class="r" style="left:452px;top:226px;width:1px;height:573px;background:#d9d9d9"></div>
<div class="r" style="left:513px;top:226px;width:1px;height:573px;background:#d9d9d9"></div>
<div class="r" style="left:574px;top:226px;width:1px;height:573px;background:#d9d9d9"></div>
<div class="r" style="left:635px;top:226px;width:1px;height:573px;background:#d9d9d9"></div>
<div class="r" style="left:696px;top:226px;width:1px;height:573px;background:#d9d9d9"></div>
<div class="r" style="left:757px;top:226px;width:1px;height:573px;background:#d9d9d9"></div>
<div class="r" style="left:818px;top:226px;width:1px;height:573px;background:#d9d9d9"></div>
<div class="r" style="left:902px;top:226px;width:1px;height:573px;background:#d9d9d9"></div>
<div class="r" style="left:1001px;top:226px;width:1px;height:573px;background:#d9d9d9"></div>
<div class="r" style="left:1090px;top:226px;width:1px;height:573px;background:#d9d9d9"></div>
<div class="r" style="left:1150px;top:226px;width:1px;height:573px;background:#d9d9d9"></div>
<div class="r" style="left:1249px;top:226px;width:1px;height:573px;background:#d9d9d9"></div>
<div class="r" style="left:1370px;top:226px;width:1px;height:573px;background:#d9d9d9"></div>
<div class="r" style="left:1431px;top:226px;width:1px;height:573px;background:#d9d9d9"></div>
<div class="r" style="left:1492px;top:226px;width:1px;height:573px;background:#d9d9d9"></div>
<div class="r" style="left:1553px;top:226px;width:1px;height:573px;background:#d9d9d9"></div>
<div class="r" style="left:1614px;top:226px;width:1px;height:573px;background:#d9d9d9"></div>
<div class="r" style="left:1675px;top:226px;width:1px;height:573px;background:#d9d9d9"></div>
<div class="r" style="left:1736px;top:226px;width:1px;height:573px;background:#d9d9d9"></div>
<div class="r" style="left:1797px;top:226px;width:1px;height:573px;background:#d9d9d9"></div>
<div class="r" style="left:1858px;top:226px;width:1px;height:573px;background:#d9d9d9"></div>
<div class="r" style="left:0px;top:244px;width:25px;height:1px;background:#c3c3c3"></div>
<div class="r" style="left:26px;top:244px;width:1773px;height:1px;background:#d9d9d9"></div>
<div class="r" style="left:0px;top:263px;width:25px;height:1px;background:#c3c3c3"></div>
<div class="r" style="left:26px;top:263px;width:1773px;height:1px;background:#d9d9d9"></div>
<div class="r" style="left:0px;top:282px;width:25px;height:1px;background:#c3c3c3"></div>
<div class="r" style="left:26px;top:282px;width:1773px;height:1px;background:#d9d9d9"></div>
<div class="r" style="left:0px;top:301px;width:25px;height:1px;background:#c3c3c3"></div>
<div class="r" style="left:26px;top:301px;width:1773px;height:1px;background:#d9d9d9"></div>
<div class="r" style="left:0px;top:320px;width:25px;height:1px;background:#c3c3c3"></div>
<div class="r" style="left:26px;top:320px;width:1773px;height:1px;background:#d9d9d9"></div>
<div class="r" style="left:0px;top:339px;width:25px;height:1px;background:#c3c3c3"></div>
<div class="r" style="left:26px;top:339px;width:1773px;height:1px;background:#d9d9d9"></div>
<div class="r" style="left:0px;top:358px;width:25px;height:1px;background:#c3c3c3"></div>
<div class="r" style="left:26px;top:358px;width:1773px;height:1px;background:#d9d9d9"></div>
<div class="r" style="left:0px;top:377px;width:25px;height:1px;background:#c3c3c3"></div>
<div class="r" style="left:26px;top:377px;width:1773px;height:1px;background:#d9d9d9"></div>
<div class="r" style="left:0px;top:396px;width:25px;height:1px;background:#c3c3c3"></div>
<div class="r" style="left:26px;top:396px;width:1773px;height:1px;background:#d9d9d9"></div>
<div class="r" style="left:0px;top:415px;width:25px;height:1px;background:#c3c3c3"></div>
<div class="r" style="left:26px;top:415px;width:1773px;height:1px;background:#d9d9d9"></div>
<div class="r" style="left:0px;top:434px;width:25px;height:1px;background:#c3c3c3"></div>
<div class="r" style="left:26px;top:434px;width:1773px;height:1px;background:#d9d9d9"></div>
<div class="r" style="left:0px;top:453px;width:25px;height:1px;background:#c3c3c3"></div>
<div class="r" style="left:26px;top:453px;width:1773px;height:1px;background:#d9d9d9"></div>
<div class="r" style="left:0px;top:472px;width:25px;height:1px;background:#c3c3c3"></div>
<div class="r" style="left:26px;top:472px;width:1773px;height:1px;background:#d9d9d9"></div>
<div class="r" style="left:0px;top:491px;width:25px;height:1px;background:#c3c3c3"></div>
<div class="r" style="left:26px;top:491px;width:1773px;height:1px;background:#d9d9d9"></div>
<div class="r" style="left:0px;top:510px;width:25px;height:1px;background:#c3c3c3"></div>
<div class="r" style="left:26px;top:510px;width:1773px;height:1px;background:#d9d9d9"></div>
<div class="r" style="left:0px;top:529px;width:25px;height:1px;background:#c3c3c3"></div>
<div class="r" style="left:26px;top:529px;width:1773px;height:1px;background:#d9d9d9"></div>
<div class="r" style="left:0px;top:548px;width:25px;height:1px;background:#c3c3c3"></div>
<div class="r" style="left:26px;top:548px;width:1773px;height:1px;background:#d9d9d9"></div>
<div class="r" style="left:0px;top:567px;width:25px;height:1px;background:#c3c3c3"></div>
<div class="r" style="left:26px;top:567px;width:1773px;height:1px;background:#d9d9d9"></div>
<div class="r" style="left:0px;top:586px;width:25px;height:1px;background:#c3c3c3"></div>
<div class="r" style="left:26px;top:586px;width:1773px;height:1px;background:#d9d9d9"></div>
<div class="r" style="left:0px;top:605px;width:25px;height:1px;background:#c3c3c3"></div>
<div class="r" style="left:26px;top:605px;width:1773px;height:1px;background:#d9d9d9"></div>
<div class="r" style="left:0px;top:624px;width:25px;height:1px;background:#c3c3c3"></div>
<div class="r" style="left:26px;top:624px;width:1773px;height:1px;background:#d9d9d9"></div>
<div class="r" style="left:0px;top:643px;width:25px;height:1px;background:#c3c3c3"></div>
<div class="r" style="left:26px;top:643px;width:1773px;height:1px;background:#d9d9d9"></div>
<div class="r" style="left:0px;top:662px;width:25px;height:1px;background:#c3c3c3"></div>
<div class="r" style="left:26px;top:662px;width:1773px;height:1px;background:#d9d9d9"></div>
<div class="r" style="left:0px;top:681px;width:25px;height:1px;background:#c3c3c3"></div>
<div class="r" style="left:26px;top:681px;width:1773px;height:1px;background:#d9d9d9"></div>
<div class="r" style="left:0px;top:700px;width:25px;height:1px;background:#c3c3c3"></div>
<div class="r" style="left:26px;top:700px;width:1773px;height:1px;background:#d9d9d9"></div>
<div class="r" style="left:0px;top:719px;width:25px;height:1px;background:#c3c3c3"></div>
<div class="r" style="left:26px;top:719px;width:1773px;height:1px;background:#d9d9d9"></div>
<div class="r" style="left:0px;top:738px;width:25px;height:1px;background:#c3c3c3"></div>
<div class="r" style="left:26px;top:738px;width:1773px;height:1px;background:#d9d9d9"></div>
<div class="r" style="left:0px;top:757px;width:25px;height:1px;background:#c3c3c3"></div>
<div class="r" style="left:26px;top:757px;width:1773px;height:1px;background:#d9d9d9"></div>
<div class="r" style="left:0px;top:776px;width:25px;height:1px;background:#c3c3c3"></div>
<div class="r" style="left:26px;top:776px;width:1773px;height:1px;background:#d9d9d9"></div>
<div class="r" style="left:0px;top:795px;width:25px;height:1px;background:#c3c3c3"></div>
<div class="r" style="left:26px;top:795px;width:1773px;height:1px;background:#d9d9d9"></div>
<div class="g" style="left:1px;top:226px;width:25px;text-align:center;color:#111;font-size:10px;line-height:19px">1</div>
<div class="g" style="left:1px;top:245px;width:25px;text-align:center;color:#111;font-size:10px;line-height:19px">2</div>
<div class="g" style="left:1px;top:264px;width:25px;text-align:center;color:#111;font-size:10px;line-height:19px">3</div>
<div class="g" style="left:1px;top:283px;width:25px;text-align:center;color:#111;font-size:10px;line-height:19px">4</div>
<div class="g" style="left:1px;top:302px;width:25px;text-align:center;color:#111;font-size:10px;line-height:19px">5</div>
<div class="g" style="left:1px;top:321px;width:25px;text-align:center;color:#111;font-size:10px;line-height:19px">6</div>
<div class="g" style="left:1px;top:340px;width:25px;text-align:center;color:#111;font-size:10px;line-height:19px">7</div>
<div class="g" style="left:1px;top:359px;width:25px;text-align:center;color:#111;font-size:10px;line-height:19px">8</div>
<div class="g" style="left:1px;top:378px;width:25px;text-align:center;color:#111;font-size:10px;line-height:19px">9</div>
<div class="g" style="left:1px;top:397px;width:25px;text-align:center;color:#111;font-size:10px;line-height:19px">10</div>
<div class="g" style="left:1px;top:416px;width:25px;text-align:center;color:#111;font-size:10px;line-height:19px">11</div>
<div class="g" style="left:1px;top:435px;width:25px;text-align:center;color:#111;font-size:10px;line-height:19px">12</div>
<div class="g" style="left:1px;top:454px;width:25px;text-align:center;color:#111;font-size:10px;line-height:19px">13</div>
<div class="g" style="left:1px;top:473px;width:25px;text-align:center;color:#111;font-size:10px;line-height:19px">14</div>
<div class="g" style="left:1px;top:492px;width:25px;text-align:center;color:#111;font-size:10px;line-height:19px">15</div>
<div class="g" style="left:1px;top:511px;width:25px;text-align:center;color:#111;font-size:10px;line-height:19px">16</div>
<div class="g" style="left:1px;top:530px;width:25px;text-align:center;color:#111;font-size:10px;line-height:19px">17</div>
<div class="g" style="left:1px;top:549px;width:25px;text-align:center;color:#111;font-size:10px;line-height:19px">18</div>
<div class="g" style="left:1px;top:568px;width:25px;text-align:center;color:#111;font-size:10px;line-height:19px">19</div>
<div class="g" style="left:1px;top:587px;width:25px;text-align:center;color:#111;font-size:10px;line-height:19px">20</div>
<div class="g" style="left:1px;top:606px;width:25px;text-align:center;color:#111;font-size:10px;line-height:19px">21</div>
<div class="g" style="left:1px;top:625px;width:25px;text-align:center;color:#111;font-size:10px;line-height:19px">22</div>
<div class="g" style="left:1px;top:644px;width:25px;text-align:center;color:#111;font-size:10px;line-height:19px">23</div>
<div class="g" style="left:1px;top:663px;width:25px;text-align:center;color:#111;font-size:10px;line-height:19px">24</div>
<div class="g" style="left:1px;top:682px;width:25px;text-align:center;color:#111;font-size:10px;line-height:19px">25</div>
<div class="g" style="left:1px;top:701px;width:25px;text-align:center;color:#111;font-size:10px;line-height:19px">26</div>
<div class="g" style="left:1px;top:720px;width:25px;text-align:center;color:#111;font-size:10px;line-height:19px">27</div>
<div class="g" style="left:1px;top:739px;width:25px;text-align:center;color:#111;font-size:10px;line-height:19px">28</div>
<div class="g" style="left:1px;top:758px;width:25px;text-align:center;color:#111;font-size:10px;line-height:19px">29</div>
<div class="g" style="left:1px;top:777px;width:25px;text-align:center;color:#111;font-size:10px;line-height:19px">30</div>
<div class="g" style="left:1px;top:796px;width:25px;text-align:center;color:#111;font-size:10px;line-height:19px">31</div>
<div class="g gl" style="left:26px;top:226px;width:60px;overflow:visible"><span style="display:inline-block;transform:scaleX(0.95);transform-origin:0 0">Time</span></div>
<div class="g gr" style="left:26px;top:245px;width:60px">0</div>
<div class="g gr" style="left:26px;top:264px;width:60px">0.02</div>
<div class="g gr" style="left:26px;top:283px;width:60px">0.04</div>
<div class="g gr" style="left:26px;top:302px;width:60px">0.06</div>
<div class="g gr" style="left:26px;top:321px;width:60px">0.08</div>
<div class="g gr" style="left:26px;top:340px;width:60px">0.1</div>
<div class="g gr" style="left:26px;top:359px;width:60px">0.12</div>
<div class="g gr" style="left:26px;top:378px;width:60px">0.14</div>
<div class="g gr" style="left:26px;top:397px;width:60px">0.16</div>
<div class="g gr" style="left:26px;top:416px;width:60px">0.18</div>
<div class="g gr" style="left:26px;top:435px;width:60px">0.2</div>
<div class="g gr" style="left:26px;top:454px;width:60px">0.22</div>
<div class="g gr" style="left:26px;top:473px;width:60px">0.24</div>
<div class="g gr" style="left:26px;top:492px;width:60px">0.26</div>
<div class="g gr" style="left:26px;top:511px;width:60px">0.28</div>
<div class="g gr" style="left:26px;top:530px;width:60px">0.3</div>
<div class="g gr" style="left:26px;top:549px;width:60px">0.32</div>
<div class="g gr" style="left:26px;top:568px;width:60px">0.34</div>
<div class="g gr" style="left:26px;top:587px;width:60px">0.36</div>
<div class="g gr" style="left:26px;top:606px;width:60px">0.38</div>
<div class="g gr" style="left:26px;top:625px;width:60px">0.4</div>
<div class="g gr" style="left:26px;top:644px;width:60px">0.42</div>
<div class="g gr" style="left:26px;top:663px;width:60px">0.44</div>
<div class="g gr" style="left:26px;top:682px;width:60px">0.46</div>
<div class="g gr" style="left:26px;top:701px;width:60px">0.48</div>
<div class="g gr" style="left:26px;top:720px;width:60px">0.5</div>
<div class="g gr" style="left:26px;top:739px;width:60px">0.52</div>
<div class="g gr" style="left:26px;top:758px;width:60px">0.54</div>
<div class="g gr" style="left:26px;top:777px;width:60px">0.56</div>
<div class="g gl" style="left:87px;top:226px;width:60px;overflow:visible"><span style="display:inline-block;transform:scaleX(0.95);transform-origin:0 0">SWA</span></div>
<div class="g gr" style="left:87px;top:245px;width:60px">400</div>
<div class="g gr" style="left:87px;top:264px;width:60px">400</div>
<div class="g gr" style="left:87px;top:283px;width:60px">400</div>
<div class="g gr" style="left:87px;top:302px;width:60px">400</div>
<div class="g gr" style="left:87px;top:321px;width:60px">400</div>
<div class="g gr" style="left:87px;top:340px;width:60px">400</div>
<div class="g gr" style="left:87px;top:359px;width:60px">400</div>
<div class="g gr" style="left:87px;top:378px;width:60px">400</div>
<div class="g gr" style="left:87px;top:397px;width:60px">400</div>
<div class="g gr" style="left:87px;top:416px;width:60px">400</div>
<div class="g gr" style="left:87px;top:435px;width:60px">400</div>
<div class="g gr" style="left:87px;top:454px;width:60px">400</div>
<div class="g gr" style="left:87px;top:473px;width:60px">400</div>
<div class="g gr" style="left:87px;top:492px;width:60px">400</div>
<div class="g gr" style="left:87px;top:511px;width:60px">400</div>
<div class="g gr" style="left:87px;top:530px;width:60px">400</div>
<div class="g gr" style="left:87px;top:549px;width:60px">400</div>
<div class="g gr" style="left:87px;top:568px;width:60px">400</div>
<div class="g gr" style="left:87px;top:587px;width:60px">400</div>
<div class="g gr" style="left:87px;top:606px;width:60px">400</div>
<div class="g gr" style="left:87px;top:625px;width:60px">400</div>
<div class="g gr" style="left:87px;top:644px;width:60px">400</div>
<div class="g gr" style="left:87px;top:663px;width:60px">400</div>
<div class="g gr" style="left:87px;top:682px;width:60px">400</div>
<div class="g gr" style="left:87px;top:701px;width:60px">400</div>
<div class="g gr" style="left:87px;top:720px;width:60px">400</div>
<div class="g gr" style="left:87px;top:739px;width:60px">400</div>
<div class="g gr" style="left:87px;top:758px;width:60px">400</div>
<div class="g gr" style="left:87px;top:777px;width:60px">400</div>
<div class="g gl" style="left:148px;top:226px;width:60px;overflow:visible"><span style="display:inline-block;transform:scaleX(0.95);transform-origin:0 0">Vx</span></div>
<div class="g gr" style="left:148px;top:245px;width:60px">-6.10E-05</div>
<div class="g gr" style="left:148px;top:264px;width:60px">-7.07E-05</div>
<div class="g gr" style="left:148px;top:283px;width:60px">0.118833</div>
<div class="g gr" style="left:148px;top:302px;width:60px">0.199182</div>
<div class="g gr" style="left:148px;top:321px;width:60px">0.298149</div>
<div class="g gr" style="left:148px;top:340px;width:60px">0.398446</div>
<div class="g gr" style="left:148px;top:359px;width:60px">0.498722</div>
<div class="g gr" style="left:148px;top:378px;width:60px">0.598642</div>
<div class="g gr" style="left:148px;top:397px;width:60px">0.698193</div>
<div class="g gr" style="left:148px;top:416px;width:60px">0.797302</div>
<div class="g gr" style="left:148px;top:435px;width:60px">0.89583</div>
<div class="g gr" style="left:148px;top:454px;width:60px">0.993581</div>
<div class="g gr" style="left:148px;top:473px;width:60px">1.090335</div>
<div class="g gr" style="left:148px;top:492px;width:60px">1.185899</div>
<div class="g gr" style="left:148px;top:511px;width:60px">1.280097</div>
<div class="g gr" style="left:148px;top:530px;width:60px">1.372833</div>
<div class="g gr" style="left:148px;top:549px;width:60px">1.464039</div>
<div class="g gr" style="left:148px;top:568px;width:60px">1.553671</div>
<div class="g gr" style="left:148px;top:587px;width:60px">1.641739</div>
<div class="g gr" style="left:148px;top:606px;width:60px">1.728252</div>
<div class="g gr" style="left:148px;top:625px;width:60px">1.813263</div>
<div class="g gr" style="left:148px;top:644px;width:60px">1.89678</div>
<div class="g gr" style="left:148px;top:663px;width:60px">1.978884</div>
<div class="g gr" style="left:148px;top:682px;width:60px">2.059591</div>
<div class="g gr" style="left:148px;top:701px;width:60px">2.13894</div>
<div class="g gr" style="left:148px;top:720px;width:60px">2.216945</div>
<div class="g gr" style="left:148px;top:739px;width:60px">2.293635</div>
<div class="g gr" style="left:148px;top:758px;width:60px">2.369086</div>
<div class="g gr" style="left:148px;top:777px;width:60px">2.443266</div>
<div class="g gl" style="left:209px;top:226px;width:60px;overflow:visible"><span style="display:inline-block;transform:scaleX(0.95);transform-origin:0 0">Vy</span></div>
<div class="g gr" style="left:209px;top:245px;width:60px">-4.42E-07</div>
<div class="g gr" style="left:209px;top:264px;width:60px">-6.90E-07</div>
<div class="g gr" style="left:209px;top:283px;width:60px">9.69E-07</div>
<div class="g gr" style="left:209px;top:302px;width:60px">0.087591</div>
<div class="g gr" style="left:209px;top:321px;width:60px">0.143087</div>
<div class="g gr" style="left:209px;top:340px;width:60px">0.200394</div>
<div class="g gr" style="left:209px;top:359px;width:60px">0.257884</div>
<div class="g gr" style="left:209px;top:378px;width:60px">0.313503</div>
<div class="g gr" style="left:209px;top:397px;width:60px">0.366104</div>
<div class="g gr" style="left:209px;top:416px;width:60px">0.415486</div>
<div class="g gr" style="left:209px;top:435px;width:60px">0.461725</div>
<div class="g gr" style="left:209px;top:454px;width:60px">0.505312</div>
<div class="g gr" style="left:209px;top:473px;width:60px">0.546814</div>
<div class="g gr" style="left:209px;top:492px;width:60px">0.586764</div>
<div class="g gr" style="left:209px;top:511px;width:60px">0.625563</div>
<div class="g gr" style="left:209px;top:530px;width:60px">0.663586</div>
<div class="g gr" style="left:209px;top:549px;width:60px">0.700904</div>
<div class="g gr" style="left:209px;top:568px;width:60px">0.737779</div>
<div class="g gr" style="left:209px;top:587px;width:60px">0.774185</div>
<div class="g gr" style="left:209px;top:606px;width:60px">0.810188</div>
<div class="g gr" style="left:209px;top:625px;width:60px">0.845688</div>
<div class="g gr" style="left:209px;top:644px;width:60px">0.880733</div>
<div class="g gr" style="left:209px;top:663px;width:60px">0.915232</div>
<div class="g gr" style="left:209px;top:682px;width:60px">0.949184</div>
<div class="g gr" style="left:209px;top:701px;width:60px">0.982573</div>
<div class="g gr" style="left:209px;top:720px;width:60px">1.015389</div>
<div class="g gr" style="left:209px;top:739px;width:60px">1.047672</div>
<div class="g gr" style="left:209px;top:758px;width:60px">1.079338</div>
<div class="g gr" style="left:209px;top:777px;width:60px">1.110462</div>
<div class="g gl" style="left:270px;top:226px;width:60px;overflow:visible"><span style="display:inline-block;transform:scaleX(0.95);transform-origin:0 0">Ax</span></div>
<div class="g gr" style="left:270px;top:245px;width:60px">-2.20E-05</div>
<div class="g gr" style="left:270px;top:264px;width:60px">-1.37E-05</div>
<div class="g gr" style="left:270px;top:283px;width:60px">0.168342</div>
<div class="g gr" style="left:270px;top:302px;width:60px">0.113757</div>
<div class="g gr" style="left:270px;top:321px;width:60px">0.140044</div>
<div class="g gr" style="left:270px;top:340px;width:60px">0.141841</div>
<div class="g gr" style="left:270px;top:359px;width:60px">0.141704</div>
<div class="g gr" style="left:270px;top:378px;width:60px">0.14107</div>
<div class="g gr" style="left:270px;top:397px;width:60px">0.140402</div>
<div class="g gr" style="left:270px;top:416px;width:60px">0.139617</div>
<div class="g gr" style="left:270px;top:435px;width:60px">0.138623</div>
<div class="g gr" style="left:270px;top:454px;width:60px">0.137344</div>
<div class="g gr" style="left:270px;top:473px;width:60px">0.135742</div>
<div class="g gr" style="left:270px;top:492px;width:60px">0.133861</div>
<div class="g gr" style="left:270px;top:511px;width:60px">0.131719</div>
<div class="g gr" style="left:270px;top:530px;width:60px">0.129432</div>
<div class="g gr" style="left:270px;top:549px;width:60px">0.127042</div>
<div class="g gr" style="left:270px;top:568px;width:60px">0.12458</div>
<div class="g gr" style="left:270px;top:587px;width:60px">0.122123</div>
<div class="g gr" style="left:270px;top:606px;width:60px">0.119671</div>
<div class="g gr" style="left:270px;top:625px;width:60px">0.117286</div>
<div class="g gr" style="left:270px;top:644px;width:60px">0.114907</div>
<div class="g gr" style="left:270px;top:663px;width:60px">0.112632</div>
<div class="g gr" style="left:270px;top:682px;width:60px">0.110376</div>
<div class="g gr" style="left:270px;top:701px;width:60px">0.108171</div>
<div class="g gr" style="left:270px;top:720px;width:60px">0.105979</div>
<div class="g gr" style="left:270px;top:739px;width:60px">0.103823</div>
<div class="g gr" style="left:270px;top:758px;width:60px">0.101773</div>
<div class="g gr" style="left:270px;top:777px;width:60px">0.099671</div>
<div class="g gl" style="left:331px;top:226px;width:60px;overflow:visible"><span style="display:inline-block;transform:scaleX(0.95);transform-origin:0 0">Ay</span></div>
<div class="g gr" style="left:331px;top:245px;width:60px">-4.29E-07</div>
<div class="g gr" style="left:331px;top:264px;width:60px">-3.51E-07</div>
<div class="g gr" style="left:331px;top:283px;width:60px">2.35E-06</div>
<div class="g gr" style="left:331px;top:302px;width:60px">0.124065</div>
<div class="g gr" style="left:331px;top:321px;width:60px">0.078732</div>
<div class="g gr" style="left:331px;top:340px;width:60px">0.081456</div>
<div class="g gr" style="left:331px;top:359px;width:60px">0.081915</div>
<div class="g gr" style="left:331px;top:378px;width:60px">0.079502</div>
<div class="g gr" style="left:331px;top:397px;width:60px">0.075499</div>
<div class="g gr" style="left:331px;top:416px;width:60px">0.071248</div>
<div class="g gr" style="left:331px;top:435px;width:60px">0.067138</div>
<div class="g gr" style="left:331px;top:454px;width:60px">0.063753</div>
<div class="g gr" style="left:331px;top:473px;width:60px">0.061205</div>
<div class="g gr" style="left:331px;top:492px;width:60px">0.059438</div>
<div class="g gr" style="left:331px;top:511px;width:60px">0.058268</div>
<div class="g gr" style="left:331px;top:530px;width:60px">0.057654</div>
<div class="g gr" style="left:331px;top:549px;width:60px">0.057164</div>
<div class="g gr" style="left:331px;top:568px;width:60px">0.057067</div>
<div class="g gr" style="left:331px;top:587px;width:60px">0.056956</div>
<div class="g gr" style="left:331px;top:606px;width:60px">0.056956</div>
<div class="g gr" style="left:331px;top:625px;width:60px">0.056833</div>
<div class="g gr" style="left:331px;top:644px;width:60px">0.056794</div>
<div class="g gr" style="left:331px;top:663px;width:60px">0.056642</div>
<div class="g gr" style="left:331px;top:682px;width:60px">0.056505</div>
<div class="g gr" style="left:331px;top:701px;width:60px">0.056357</div>
<div class="g gr" style="left:331px;top:720px;width:60px">0.056209</div>
<div class="g gr" style="left:331px;top:739px;width:60px">0.056127</div>
<div class="g gr" style="left:331px;top:758px;width:60px">0.055938</div>
<div class="g gr" style="left:331px;top:777px;width:60px">0.055866</div>
<div class="g gl" style="left:392px;top:226px;width:60px;overflow:visible"><span style="display:inline-block;transform:scaleX(0.95);transform-origin:0 0">Az</span></div>
<div class="g gr" style="left:392px;top:245px;width:60px">0.000132</div>
<div class="g gr" style="left:392px;top:264px;width:60px">8.65E-05</div>
<div class="g gr" style="left:392px;top:283px;width:60px">-6.70E-05</div>
<div class="g gr" style="left:392px;top:302px;width:60px">0.003302</div>
<div class="g gr" style="left:392px;top:321px;width:60px">0.004685</div>
<div class="g gr" style="left:392px;top:340px;width:60px">0.005786</div>
<div class="g gr" style="left:392px;top:359px;width:60px">0.006017</div>
<div class="g gr" style="left:392px;top:378px;width:60px">0.005331</div>
<div class="g gr" style="left:392px;top:397px;width:60px">0.003896</div>
<div class="g gr" style="left:392px;top:416px;width:60px">0.001981</div>
<div class="g gr" style="left:392px;top:435px;width:60px">-0.00019</div>
<div class="g gr" style="left:392px;top:454px;width:60px">-0.00232</div>
<div class="g gr" style="left:392px;top:473px;width:60px">-0.00424</div>
<div class="g gr" style="left:392px;top:492px;width:60px">-0.00578</div>
<div class="g gr" style="left:392px;top:511px;width:60px">-0.00683</div>
<div class="g gr" style="left:392px;top:530px;width:60px">-0.00737</div>
<div class="g gr" style="left:392px;top:549px;width:60px">-0.00741</div>
<div class="g gr" style="left:392px;top:568px;width:60px">-0.00698</div>
<div class="g gr" style="left:392px;top:587px;width:60px">-0.00618</div>
<div class="g gr" style="left:392px;top:606px;width:60px">-0.00514</div>
<div class="g gr" style="left:392px;top:625px;width:60px">-0.0039</div>
<div class="g gr" style="left:392px;top:644px;width:60px">-0.0026</div>
<div class="g gr" style="left:392px;top:663px;width:60px">-0.00134</div>
<div class="g gr" style="left:392px;top:682px;width:60px">-0.00015</div>
<div class="g gr" style="left:392px;top:701px;width:60px">0.000854</div>
<div class="g gr" style="left:392px;top:720px;width:60px">0.001652</div>
<div class="g gr" style="left:392px;top:739px;width:60px">0.002273</div>
<div class="g gr" style="left:392px;top:758px;width:60px">0.002636</div>
<div class="g gr" style="left:392px;top:777px;width:60px">0.002812</div>
<div class="g gl" style="left:453px;top:226px;width:60px;overflow:visible"><span style="display:inline-block;transform:scaleX(0.95);transform-origin:0 0">Roll</span></div>
<div class="g gr" style="left:453px;top:245px;width:60px">-0.02363</div>
<div class="g gr" style="left:453px;top:264px;width:60px">-0.02363</div>
<div class="g gr" style="left:453px;top:283px;width:60px">-0.02363</div>
<div class="g gr" style="left:453px;top:302px;width:60px">0.017181</div>
<div class="g gr" style="left:453px;top:321px;width:60px">0.04715</div>
<div class="g gr" style="left:453px;top:340px;width:60px">0.064514</div>
<div class="g gr" style="left:453px;top:359px;width:60px">0.071686</div>
<div class="g gr" style="left:453px;top:378px;width:60px">0.071838</div>
<div class="g gr" style="left:453px;top:397px;width:60px">0.067749</div>
<div class="g gr" style="left:453px;top:416px;width:60px">0.06189</div>
<div class="g gr" style="left:453px;top:435px;width:60px">0.055756</div>
<div class="g gr" style="left:453px;top:454px;width:60px">0.050354</div>
<div class="g gr" style="left:453px;top:473px;width:60px">0.046021</div>
<div class="g gr" style="left:453px;top:492px;width:60px">0.042877</div>
<div class="g gr" style="left:453px;top:511px;width:60px">0.040741</div>
<div class="g gr" style="left:453px;top:530px;width:60px">0.039581</div>
<div class="g gr" style="left:453px;top:549px;width:60px">0.038971</div>
<div class="g gr" style="left:453px;top:568px;width:60px">0.038757</div>
<div class="g gr" style="left:453px;top:587px;width:60px">0.038727</div>
<div class="g gr" style="left:453px;top:606px;width:60px">0.038757</div>
<div class="g gr" style="left:453px;top:625px;width:60px">0.038757</div>
<div class="g gr" style="left:453px;top:644px;width:60px">0.038757</div>
<div class="g gr" style="left:453px;top:663px;width:60px">0.038727</div>
<div class="g gr" style="left:453px;top:682px;width:60px">0.038605</div>
<div class="g gr" style="left:453px;top:701px;width:60px">0.038513</div>
<div class="g gr" style="left:453px;top:720px;width:60px">0.0383</div>
<div class="g gr" style="left:453px;top:739px;width:60px">0.038177</div>
<div class="g gr" style="left:453px;top:758px;width:60px">0.038055</div>
<div class="g gr" style="left:453px;top:777px;width:60px">0.037903</div>
<div class="g gl" style="left:514px;top:226px;width:60px;overflow:visible"><span style="display:inline-block;transform:scaleX(0.95);transform-origin:0 0">Pitch</span></div>
<div class="g gr" style="left:514px;top:245px;width:60px">-0.05121</div>
<div class="g gr" style="left:514px;top:264px;width:60px">-0.0513</div>
<div class="g gr" style="left:514px;top:283px;width:60px">-0.05994</div>
<div class="g gr" style="left:514px;top:302px;width:60px">-0.07159</div>
<div class="g gr" style="left:514px;top:321px;width:60px">-0.08591</div>
<div class="g gr" style="left:514px;top:340px;width:60px">-0.10117</div>
<div class="g gr" style="left:514px;top:359px;width:60px">-0.11591</div>
<div class="g gr" style="left:514px;top:378px;width:60px">-0.12903</div>
<div class="g gr" style="left:514px;top:397px;width:60px">-0.13992</div>
<div class="g gr" style="left:514px;top:416px;width:60px">-0.14825</div>
<div class="g gr" style="left:514px;top:435px;width:60px">-0.15405</div>
<div class="g gr" style="left:514px;top:454px;width:60px">-0.15744</div>
<div class="g gr" style="left:514px;top:473px;width:60px">-0.15878</div>
<div class="g gr" style="left:514px;top:492px;width:60px">-0.15845</div>
<div class="g gr" style="left:514px;top:511px;width:60px">-0.1568</div>
<div class="g gr" style="left:514px;top:530px;width:60px">-0.15424</div>
<div class="g gr" style="left:514px;top:549px;width:60px">-0.15103</div>
<div class="g gr" style="left:514px;top:568px;width:60px">-0.14749</div>
<div class="g gr" style="left:514px;top:587px;width:60px">-0.14377</div>
<div class="g gr" style="left:514px;top:606px;width:60px">-0.14008</div>
<div class="g gr" style="left:514px;top:625px;width:60px">-0.13647</div>
<div class="g gr" style="left:514px;top:644px;width:60px">-0.13306</div>
<div class="g gr" style="left:514px;top:663px;width:60px">-0.12985</div>
<div class="g gr" style="left:514px;top:682px;width:60px">-0.12692</div>
<div class="g gr" style="left:514px;top:701px;width:60px">-0.12421</div>
<div class="g gr" style="left:514px;top:720px;width:60px">-0.12177</div>
<div class="g gr" style="left:514px;top:739px;width:60px">-0.11957</div>
<div class="g gr" style="left:514px;top:758px;width:60px">-0.11761</div>
<div class="g gr" style="left:514px;top:777px;width:60px">-0.11591</div>
<div class="g gl" style="left:575px;top:226px;width:60px;overflow:visible"><span style="display:inline-block;transform:scaleX(0.95);transform-origin:0 0">Yaw</span></div>
<div class="g gr" style="left:575px;top:245px;width:60px">-0.00033</div>
<div class="g gr" style="left:575px;top:264px;width:60px">-0.00033</div>
<div class="g gr" style="left:575px;top:283px;width:60px">-0.00032</div>
<div class="g gr" style="left:575px;top:302px;width:60px">0.018829</div>
<div class="g gr" style="left:575px;top:321px;width:60px">0.052063</div>
<div class="g gr" style="left:575px;top:340px;width:60px">0.096008</div>
<div class="g gr" style="left:575px;top:359px;width:60px">0.149078</div>
<div class="g gr" style="left:575px;top:378px;width:60px">0.210449</div>
<div class="g gr" style="left:575px;top:397px;width:60px">0.279816</div>
<div class="g gr" style="left:575px;top:416px;width:60px">0.356903</div>
<div class="g gr" style="left:575px;top:435px;width:60px">0.44162</div>
<div class="g gr" style="left:575px;top:454px;width:60px">0.533814</div>
<div class="g gr" style="left:575px;top:473px;width:60px">0.633301</div>
<div class="g gr" style="left:575px;top:492px;width:60px">0.740021</div>
<div class="g gr" style="left:575px;top:511px;width:60px">0.853821</div>
<div class="g gr" style="left:575px;top:530px;width:60px">0.974548</div>
<div class="g gr" style="left:575px;top:549px;width:60px">1.102112</div>
<div class="g gr" style="left:575px;top:568px;width:60px">1.23642</div>
<div class="g gr" style="left:575px;top:587px;width:60px">1.377319</div>
<div class="g gr" style="left:575px;top:606px;width:60px">1.524719</div>
<div class="g gr" style="left:575px;top:625px;width:60px">1.678497</div>
<div class="g gr" style="left:575px;top:644px;width:60px">1.838593</div>
<div class="g gr" style="left:575px;top:663px;width:60px">2.004883</div>
<div class="g gr" style="left:575px;top:682px;width:60px">2.177277</div>
<div class="g gr" style="left:575px;top:701px;width:60px">2.355682</div>
<div class="g gr" style="left:575px;top:720px;width:60px">2.539948</div>
<div class="g gr" style="left:575px;top:739px;width:60px">2.730072</div>
<div class="g gr" style="left:575px;top:758px;width:60px">2.925873</div>
<div class="g gr" style="left:575px;top:777px;width:60px">3.127289</div>
<div class="g gl" style="left:636px;top:226px;width:60px;overflow:visible"><span style="display:inline-block;transform:scaleX(0.95);transform-origin:0 0">RollVel</span></div>
<div class="g gr" style="left:636px;top:245px;width:60px">1.55E-05</div>
<div class="g gr" style="left:636px;top:264px;width:60px">2.70E-05</div>
<div class="g gr" style="left:636px;top:283px;width:60px">6.06E-05</div>
<div class="g gr" style="left:636px;top:302px;width:60px">2.040422</div>
<div class="g gr" style="left:636px;top:321px;width:60px">1.499063</div>
<div class="g gr" style="left:636px;top:340px;width:60px">0.869643</div>
<div class="g gr" style="left:636px;top:359px;width:60px">0.359182</div>
<div class="g gr" style="left:636px;top:378px;width:60px">0.010618</div>
<div class="g gr" style="left:636px;top:397px;width:60px">-0.2018</div>
<div class="g gr" style="left:636px;top:416px;width:60px">-0.29198</div>
<div class="g gr" style="left:636px;top:435px;width:60px">-0.3037</div>
<div class="g gr" style="left:636px;top:454px;width:60px">-0.26948</div>
<div class="g gr" style="left:636px;top:473px;width:60px">-0.21564</div>
<div class="g gr" style="left:636px;top:492px;width:60px">-0.15667</div>
<div class="g gr" style="left:636px;top:511px;width:60px">-0.10817</div>
<div class="g gr" style="left:636px;top:530px;width:60px">-0.06023</div>
<div class="g gr" style="left:636px;top:549px;width:60px">-0.03361</div>
<div class="g gr" style="left:636px;top:568px;width:60px">-0.01338</div>
<div class="g gr" style="left:636px;top:587px;width:60px">-0.00693</div>
<div class="g gr" style="left:636px;top:606px;width:60px">-0.00211</div>
<div class="g gr" style="left:636px;top:625px;width:60px">-0.00502</div>
<div class="g gr" style="left:636px;top:644px;width:60px">-0.00537</div>
<div class="g gr" style="left:636px;top:663px;width:60px">-0.00811</div>
<div class="g gr" style="left:636px;top:682px;width:60px">-0.01012</div>
<div class="g gr" style="left:636px;top:701px;width:60px">-0.01128</div>
<div class="g gr" style="left:636px;top:720px;width:60px">-0.01529</div>
<div class="g gr" style="left:636px;top:739px;width:60px">-0.01158</div>
<div class="g gr" style="left:636px;top:758px;width:60px">-0.01103</div>
<div class="g gr" style="left:636px;top:777px;width:60px">-0.01119</div>
<div class="g gl" style="left:697px;top:226px;width:60px;overflow:visible"><span style="display:inline-block;transform:scaleX(0.95);transform-origin:0 0">PitchVel</span></div>
<div class="g gr" style="left:697px;top:245px;width:60px">-0.00316</div>
<div class="g gr" style="left:697px;top:264px;width:60px">-0.00366</div>
<div class="g gr" style="left:697px;top:283px;width:60px">-0.43226</div>
<div class="g gr" style="left:697px;top:302px;width:60px">-0.58277</div>
<div class="g gr" style="left:697px;top:321px;width:60px">-0.71513</div>
<div class="g gr" style="left:697px;top:340px;width:60px">-0.76176</div>
<div class="g gr" style="left:697px;top:359px;width:60px">-0.73569</div>
<div class="g gr" style="left:697px;top:378px;width:60px">-0.65667</div>
<div class="g gr" style="left:697px;top:397px;width:60px">-0.54507</div>
<div class="g gr" style="left:697px;top:416px;width:60px">-0.41845</div>
<div class="g gr" style="left:697px;top:435px;width:60px">-0.29093</div>
<div class="g gr" style="left:697px;top:454px;width:60px">-0.17249</div>
<div class="g gr" style="left:697px;top:473px;width:60px">-0.06943</div>
<div class="g gr" style="left:697px;top:492px;width:60px">0.015179</div>
<div class="g gr" style="left:697px;top:511px;width:60px">0.080637</div>
<div class="g gr" style="left:697px;top:530px;width:60px">0.127938</div>
<div class="g gr" style="left:697px;top:549px;width:60px">0.15918</div>
<div class="g gr" style="left:697px;top:568px;width:60px">0.177317</div>
<div class="g gr" style="left:697px;top:587px;width:60px">0.185013</div>
<div class="g gr" style="left:697px;top:606px;width:60px">0.185048</div>
<div class="g gr" style="left:697px;top:625px;width:60px">0.179581</div>
<div class="g gr" style="left:697px;top:644px;width:60px">0.170836</div>
<div class="g gr" style="left:697px;top:663px;width:60px">0.159766</div>
<div class="g gr" style="left:697px;top:682px;width:60px">0.147634</div>
<div class="g gr" style="left:697px;top:701px;width:60px">0.134912</div>
<div class="g gr" style="left:697px;top:720px;width:60px">0.121858</div>
<div class="g gr" style="left:697px;top:739px;width:60px">0.10936</div>
<div class="g gr" style="left:697px;top:758px;width:60px">0.096677</div>
<div class="g gr" style="left:697px;top:777px;width:60px">0.084506</div>
<div class="g gl" style="left:758px;top:226px;width:60px;overflow:visible"><span style="display:inline-block;transform:scaleX(0.95);transform-origin:0 0">YawVel</span></div>
<div class="g gr" style="left:758px;top:245px;width:60px">4.27E-07</div>
<div class="g gr" style="left:758px;top:264px;width:60px">4.06E-07</div>
<div class="g gr" style="left:758px;top:283px;width:60px">0.000223</div>
<div class="g gr" style="left:758px;top:302px;width:60px">0.96052</div>
<div class="g gr" style="left:758px;top:321px;width:60px">1.663474</div>
<div class="g gr" style="left:758px;top:340px;width:60px">2.19911</div>
<div class="g gr" style="left:758px;top:359px;width:60px">2.653241</div>
<div class="g gr" style="left:758px;top:378px;width:60px">3.069299</div>
<div class="g gr" style="left:758px;top:397px;width:60px">3.466988</div>
<div class="g gr" style="left:758px;top:416px;width:60px">3.854642</div>
<div class="g gr" style="left:758px;top:435px;width:60px">4.234793</div>
<div class="g gr" style="left:758px;top:454px;width:60px">4.608097</div>
<div class="g gr" style="left:758px;top:473px;width:60px">4.974936</div>
<div class="g gr" style="left:758px;top:492px;width:60px">5.33515</div>
<div class="g gr" style="left:758px;top:511px;width:60px">5.688899</div>
<div class="g gr" style="left:758px;top:530px;width:60px">6.036674</div>
<div class="g gr" style="left:758px;top:549px;width:60px">6.378403</div>
<div class="g gr" style="left:758px;top:568px;width:60px">6.714453</div>
<div class="g gr" style="left:758px;top:587px;width:60px">7.044925</div>
<div class="g gr" style="left:758px;top:606px;width:60px">7.370225</div>
<div class="g gr" style="left:758px;top:625px;width:60px">7.689898</div>
<div class="g gr" style="left:758px;top:644px;width:60px">8.004772</div>
<div class="g gr" style="left:758px;top:663px;width:60px">8.314677</div>
<div class="g gr" style="left:758px;top:682px;width:60px">8.619513</div>
<div class="g gr" style="left:758px;top:701px;width:60px">8.919318</div>
<div class="g gr" style="left:758px;top:720px;width:60px">9.214447</div>
<div class="g gr" style="left:758px;top:739px;width:60px">9.504827</div>
<div class="g gr" style="left:758px;top:758px;width:60px">9.790083</div>
<div class="g gr" style="left:758px;top:777px;width:60px">10.07095</div>
<div class="g gl" style="left:819px;top:226px;width:83px;overflow:visible"><span style="display:inline-block;transform:scaleX(0.95);transform-origin:0 0">EngineRPM</span></div>
<div class="g gr" style="left:819px;top:245px;width:83px">0</div>
<div class="g gr" style="left:819px;top:264px;width:83px">0</div>
<div class="g gr" style="left:819px;top:283px;width:83px">8.164</div>
<div class="g gr" style="left:819px;top:302px;width:83px">18.092</div>
<div class="g gr" style="left:819px;top:321px;width:83px">26.809</div>
<div class="g gr" style="left:819px;top:340px;width:83px">35.098</div>
<div class="g gr" style="left:819px;top:359px;width:83px">43.204</div>
<div class="g gr" style="left:819px;top:378px;width:83px">51.19</div>
<div class="g gr" style="left:819px;top:397px;width:83px">59.066</div>
<div class="g gr" style="left:819px;top:416px;width:83px">66.847</div>
<div class="g gr" style="left:819px;top:435px;width:83px">74.517</div>
<div class="g gr" style="left:819px;top:454px;width:83px">82.074</div>
<div class="g gr" style="left:819px;top:473px;width:83px">89.514</div>
<div class="g gr" style="left:819px;top:492px;width:83px">96.841</div>
<div class="g gr" style="left:819px;top:511px;width:83px">104.05</div>
<div class="g gr" style="left:819px;top:530px;width:83px">111.155</div>
<div class="g gr" style="left:819px;top:549px;width:83px">118.141</div>
<div class="g gr" style="left:819px;top:568px;width:83px">125.023</div>
<div class="g gr" style="left:819px;top:587px;width:83px">131.793</div>
<div class="g gr" style="left:819px;top:606px;width:83px">138.457</div>
<div class="g gr" style="left:819px;top:625px;width:83px">145.014</div>
<div class="g gr" style="left:819px;top:644px;width:83px">151.466</div>
<div class="g gr" style="left:819px;top:663px;width:83px">157.812</div>
<div class="g gr" style="left:819px;top:682px;width:83px">164.056</div>
<div class="g gr" style="left:819px;top:701px;width:83px">170.197</div>
<div class="g gr" style="left:819px;top:720px;width:83px">176.236</div>
<div class="g gr" style="left:819px;top:739px;width:83px">182.172</div>
<div class="g gr" style="left:819px;top:758px;width:83px">188.012</div>
<div class="g gr" style="left:819px;top:777px;width:83px">193.755</div>
<div class="g gl" style="left:903px;top:226px;width:98px;overflow:visible"><span style="display:inline-block;transform:scaleX(0.95);transform-origin:0 0">CurrentGear</span></div>
<div class="g gr" style="left:903px;top:245px;width:98px">1</div>
<div class="g gr" style="left:903px;top:264px;width:98px">1</div>
<div class="g gr" style="left:903px;top:283px;width:98px">1</div>
<div class="g gr" style="left:903px;top:302px;width:98px">1</div>
<div class="g gr" style="left:903px;top:321px;width:98px">1</div>
<div class="g gr" style="left:903px;top:340px;width:98px">1</div>
<div class="g gr" style="left:903px;top:359px;width:98px">1</div>
<div class="g gr" style="left:903px;top:378px;width:98px">1</div>
<div class="g gr" style="left:903px;top:397px;width:98px">1</div>
<div class="g gr" style="left:903px;top:416px;width:98px">1</div>
<div class="g gr" style="left:903px;top:435px;width:98px">1</div>
<div class="g gr" style="left:903px;top:454px;width:98px">1</div>
<div class="g gr" style="left:903px;top:473px;width:98px">1</div>
<div class="g gr" style="left:903px;top:492px;width:98px">1</div>
<div class="g gr" style="left:903px;top:511px;width:98px">1</div>
<div class="g gr" style="left:903px;top:530px;width:98px">1</div>
<div class="g gr" style="left:903px;top:549px;width:98px">1</div>
<div class="g gr" style="left:903px;top:568px;width:98px">1</div>
<div class="g gr" style="left:903px;top:587px;width:98px">1</div>
<div class="g gr" style="left:903px;top:606px;width:98px">1</div>
<div class="g gr" style="left:903px;top:625px;width:98px">1</div>
<div class="g gr" style="left:903px;top:644px;width:98px">1</div>
<div class="g gr" style="left:903px;top:663px;width:98px">1</div>
<div class="g gr" style="left:903px;top:682px;width:98px">1</div>
<div class="g gr" style="left:903px;top:701px;width:98px">1</div>
<div class="g gr" style="left:903px;top:720px;width:98px">1</div>
<div class="g gr" style="left:903px;top:739px;width:98px">1</div>
<div class="g gr" style="left:903px;top:758px;width:98px">1</div>
<div class="g gr" style="left:903px;top:777px;width:98px">1</div>
<div class="g gl" style="left:1002px;top:226px;width:88px;overflow:visible"><span style="display:inline-block;transform:scaleX(0.95);transform-origin:0 0">Throttle</span></div>
<div class="g gr" style="left:1002px;top:245px;width:88px">0.4074</div>
<div class="g gr" style="left:1002px;top:264px;width:88px">0.4074</div>
<div class="g gr" style="left:1002px;top:283px;width:88px">0.4074</div>
<div class="g gr" style="left:1002px;top:302px;width:88px">0.4028</div>
<div class="g gr" style="left:1002px;top:321px;width:88px">0.3989</div>
<div class="g gr" style="left:1002px;top:340px;width:88px">0.3945</div>
<div class="g gr" style="left:1002px;top:359px;width:88px">0.39</div>
<div class="g gr" style="left:1002px;top:378px;width:88px">0.3856</div>
<div class="g gr" style="left:1002px;top:397px;width:88px">0.3811</div>
<div class="g gr" style="left:1002px;top:416px;width:88px">0.3767</div>
<div class="g gr" style="left:1002px;top:435px;width:88px">0.3724</div>
<div class="g gr" style="left:1002px;top:454px;width:88px">0.3682</div>
<div class="g gr" style="left:1002px;top:473px;width:88px">0.364</div>
<div class="g gr" style="left:1002px;top:492px;width:88px">0.36</div>
<div class="g gr" style="left:1002px;top:511px;width:88px">0.3559</div>
<div class="g gr" style="left:1002px;top:530px;width:88px">0.352</div>
<div class="g gr" style="left:1002px;top:549px;width:88px">0.3481</div>
<div class="g gr" style="left:1002px;top:568px;width:88px">0.3443</div>
<div class="g gr" style="left:1002px;top:587px;width:88px">0.3405</div>
<div class="g gr" style="left:1002px;top:606px;width:88px">0.3368</div>
<div class="g gr" style="left:1002px;top:625px;width:88px">0.3332</div>
<div class="g gr" style="left:1002px;top:644px;width:88px">0.3296</div>
<div class="g gr" style="left:1002px;top:663px;width:88px">0.3261</div>
<div class="g gr" style="left:1002px;top:682px;width:88px">0.3226</div>
<div class="g gr" style="left:1002px;top:701px;width:88px">0.3192</div>
<div class="g gr" style="left:1002px;top:720px;width:88px">0.3159</div>
<div class="g gr" style="left:1002px;top:739px;width:88px">0.3126</div>
<div class="g gr" style="left:1002px;top:758px;width:88px">0.3093</div>
<div class="g gr" style="left:1002px;top:777px;width:88px">0.3062</div>
<div class="g gl" style="left:1091px;top:226px;width:59px;overflow:visible"><span style="display:inline-block;transform:scaleX(0.95);transform-origin:0 0">Brake</span></div>
<div class="g gr" style="left:1091px;top:245px;width:59px">0</div>
<div class="g gr" style="left:1091px;top:264px;width:59px">0</div>
<div class="g gr" style="left:1091px;top:283px;width:59px">0</div>
<div class="g gr" style="left:1091px;top:302px;width:59px">0</div>
<div class="g gr" style="left:1091px;top:321px;width:59px">0</div>
<div class="g gr" style="left:1091px;top:340px;width:59px">0</div>
<div class="g gr" style="left:1091px;top:359px;width:59px">0</div>
<div class="g gr" style="left:1091px;top:378px;width:59px">0</div>
<div class="g gr" style="left:1091px;top:397px;width:59px">0</div>
<div class="g gr" style="left:1091px;top:416px;width:59px">0</div>
<div class="g gr" style="left:1091px;top:435px;width:59px">0</div>
<div class="g gr" style="left:1091px;top:454px;width:59px">0</div>
<div class="g gr" style="left:1091px;top:473px;width:59px">0</div>
<div class="g gr" style="left:1091px;top:492px;width:59px">0</div>
<div class="g gr" style="left:1091px;top:511px;width:59px">0</div>
<div class="g gr" style="left:1091px;top:530px;width:59px">0</div>
<div class="g gr" style="left:1091px;top:549px;width:59px">0</div>
<div class="g gr" style="left:1091px;top:568px;width:59px">0</div>
<div class="g gr" style="left:1091px;top:587px;width:59px">0</div>
<div class="g gr" style="left:1091px;top:606px;width:59px">0</div>
<div class="g gr" style="left:1091px;top:625px;width:59px">0</div>
<div class="g gr" style="left:1091px;top:644px;width:59px">0</div>
<div class="g gr" style="left:1091px;top:663px;width:59px">0</div>
<div class="g gr" style="left:1091px;top:682px;width:59px">0</div>
<div class="g gr" style="left:1091px;top:701px;width:59px">0</div>
<div class="g gr" style="left:1091px;top:720px;width:59px">0</div>
<div class="g gr" style="left:1091px;top:739px;width:59px">0</div>
<div class="g gr" style="left:1091px;top:758px;width:59px">0</div>
<div class="g gr" style="left:1091px;top:777px;width:59px">0</div>
<div class="g gl" style="left:1151px;top:226px;width:98px;overflow:visible"><span style="display:inline-block;transform:scaleX(0.95);transform-origin:0 0">VehiclePosX</span></div>
<div class="g gr" style="left:1151px;top:245px;width:98px">1369.999</div>
<div class="g gr" style="left:1151px;top:264px;width:98px">1369.999</div>
<div class="g gr" style="left:1151px;top:283px;width:98px">1369.999</div>
<div class="g gr" style="left:1151px;top:302px;width:98px">1369.999</div>
<div class="g gr" style="left:1151px;top:321px;width:98px">1369.999</div>
<div class="g gr" style="left:1151px;top:340px;width:98px">1369.999</div>
<div class="g gr" style="left:1151px;top:359px;width:98px">1369.999</div>
<div class="g gr" style="left:1151px;top:378px;width:98px">1369.998</div>
<div class="g gr" style="left:1151px;top:397px;width:98px">1369.999</div>
<div class="g gr" style="left:1151px;top:416px;width:98px">1369.999</div>
<div class="g gr" style="left:1151px;top:435px;width:98px">1369.999</div>
<div class="g gr" style="left:1151px;top:454px;width:98px">1369.999</div>
<div class="g gr" style="left:1151px;top:473px;width:98px">1369.999</div>
<div class="g gr" style="left:1151px;top:492px;width:98px">1369.999</div>
<div class="g gr" style="left:1151px;top:511px;width:98px">1370</div>
<div class="g gr" style="left:1151px;top:530px;width:98px">1370</div>
<div class="g gr" style="left:1151px;top:549px;width:98px">1370</div>
<div class="g gr" style="left:1151px;top:568px;width:98px">1370.001</div>
<div class="g gr" style="left:1151px;top:587px;width:98px">1370.001</div>
<div class="g gr" style="left:1151px;top:606px;width:98px">1370.002</div>
<div class="g gr" style="left:1151px;top:625px;width:98px">1370.002</div>
<div class="g gr" style="left:1151px;top:644px;width:98px">1370.003</div>
<div class="g gr" style="left:1151px;top:663px;width:98px">1370.004</div>
<div class="g gr" style="left:1151px;top:682px;width:98px">1370.004</div>
<div class="g gr" style="left:1151px;top:701px;width:98px">1370.005</div>
<div class="g gr" style="left:1151px;top:720px;width:98px">1370.006</div>
<div class="g gr" style="left:1151px;top:739px;width:98px">1370.007</div>
<div class="g gr" style="left:1151px;top:758px;width:98px">1370.008</div>
<div class="g gr" style="left:1151px;top:777px;width:98px">1370.009</div>
<div class="g gl" style="left:1250px;top:226px;width:120px;overflow:visible"><span style="display:inline-block;transform:scaleX(0.95);transform-origin:0 0">VehiclePosY</span></div>
<div class="g gr" style="left:1250px;top:245px;width:120px">41.49902</div>
<div class="g gr" style="left:1250px;top:264px;width:120px">41.49902</div>
<div class="g gr" style="left:1250px;top:283px;width:120px">41.49836</div>
<div class="g gr" style="left:1250px;top:302px;width:120px">41.49725</div>
<div class="g gr" style="left:1250px;top:321px;width:120px">41.4956</div>
<div class="g gr" style="left:1250px;top:340px;width:120px">41.49338</div>
<div class="g gr" style="left:1250px;top:359px;width:120px">41.49061</div>
<div class="g gr" style="left:1250px;top:378px;width:120px">41.48729</div>
<div class="g gr" style="left:1250px;top:397px;width:120px">41.48341</div>
<div class="g gr" style="left:1250px;top:416px;width:120px">41.47898</div>
<div class="g gr" style="left:1250px;top:435px;width:120px">41.47401</div>
<div class="g gr" style="left:1250px;top:454px;width:120px">41.46849</div>
<div class="g gr" style="left:1250px;top:473px;width:120px">41.46244</div>
<div class="g gr" style="left:1250px;top:492px;width:120px">41.45586</div>
<div class="g gr" style="left:1250px;top:511px;width:120px">41.44876</div>
<div class="g gr" style="left:1250px;top:530px;width:120px">41.44114</div>
<div class="g gr" style="left:1250px;top:549px;width:120px">41.43301</div>
<div class="g gr" style="left:1250px;top:568px;width:120px">41.4244</div>
<div class="g gr" style="left:1250px;top:587px;width:120px">41.41529</div>
<div class="g gr" style="left:1250px;top:606px;width:120px">41.4057</div>
<div class="g gr" style="left:1250px;top:625px;width:120px">41.39565</div>
<div class="g gr" style="left:1250px;top:644px;width:120px">41.38513</div>
<div class="g gr" style="left:1250px;top:663px;width:120px">41.37416</div>
<div class="g gr" style="left:1250px;top:682px;width:120px">41.36274</div>
<div class="g gr" style="left:1250px;top:701px;width:120px">41.35089</div>
<div class="g gr" style="left:1250px;top:720px;width:120px">41.33861</div>
<div class="g gr" style="left:1250px;top:739px;width:120px">41.3259</div>
<div class="g gr" style="left:1250px;top:758px;width:120px">41.31279</div>
<div class="g gr" style="left:1250px;top:777px;width:120px">41.29926</div>
<div class="g gl" style="left:1371px;top:226px;width:60px;overflow:visible"><span style="display:inline-block;transform:scaleX(0.95);transform-origin:0 0">F1L_RPM</span></div>
<div class="g gr" style="left:1371px;top:245px;width:60px">1.49E-16</div>
<div class="g gr" style="left:1371px;top:264px;width:60px">-3.57E-06</div>
<div class="g gr" style="left:1371px;top:283px;width:60px">0.828133</div>
<div class="g gr" style="left:1371px;top:302px;width:60px">1.923873</div>
<div class="g gr" style="left:1371px;top:321px;width:60px">2.765152</div>
<div class="g gr" style="left:1371px;top:340px;width:60px">3.612597</div>
<div class="g gr" style="left:1371px;top:359px;width:60px">4.466096</div>
<div class="g gr" style="left:1371px;top:378px;width:60px">5.318291</div>
<div class="g gr" style="left:1371px;top:397px;width:60px">6.1634</div>
<div class="g gr" style="left:1371px;top:416px;width:60px">7.000169</div>
<div class="g gr" style="left:1371px;top:435px;width:60px">7.825682</div>
<div class="g gr" style="left:1371px;top:454px;width:60px">8.639642</div>
<div class="g gr" style="left:1371px;top:473px;width:60px">9.44122</div>
<div class="g gr" style="left:1371px;top:492px;width:60px">10.23093</div>
<div class="g gr" style="left:1371px;top:511px;width:60px">11.00842</div>
<div class="g gr" style="left:1371px;top:530px;width:60px">11.77504</div>
<div class="g gr" style="left:1371px;top:549px;width:60px">12.5287</div>
<div class="g gr" style="left:1371px;top:568px;width:60px">13.27136</div>
<div class="g gr" style="left:1371px;top:587px;width:60px">14.00226</div>
<div class="g gr" style="left:1371px;top:606px;width:60px">14.72144</div>
<div class="g gr" style="left:1371px;top:625px;width:60px">15.42938</div>
<div class="g gr" style="left:1371px;top:644px;width:60px">16.1259</div>
<div class="g gr" style="left:1371px;top:663px;width:60px">16.8113</div>
<div class="g gr" style="left:1371px;top:682px;width:60px">17.48497</div>
<div class="g gr" style="left:1371px;top:701px;width:60px">18.14832</div>
<div class="g gr" style="left:1371px;top:720px;width:60px">18.80017</div>
<div class="g gr" style="left:1371px;top:739px;width:60px">19.44036</div>
<div class="g gr" style="left:1371px;top:758px;width:60px">20.07079</div>
<div class="g gr" style="left:1371px;top:777px;width:60px">20.69084</div>
<div class="g gl" style="left:1432px;top:226px;width:60px;overflow:visible"><span style="display:inline-block;transform:scaleX(0.95);transform-origin:0 0">F1L_Fx</span></div>
<div class="g gr" style="left:1432px;top:245px;width:60px">2.304806</div>
<div class="g gr" style="left:1432px;top:264px;width:60px">1654.264</div>
<div class="g gr" style="left:1432px;top:283px;width:60px">1637.808</div>
<div class="g gr" style="left:1432px;top:302px;width:60px">1632.491</div>
<div class="g gr" style="left:1432px;top:321px;width:60px">1618.869</div>
<div class="g gr" style="left:1432px;top:340px;width:60px">1602.91</div>
<div class="g gr" style="left:1432px;top:359px;width:60px">1584.923</div>
<div class="g gr" style="left:1432px;top:378px;width:60px">1566.677</div>
<div class="g gr" style="left:1432px;top:397px;width:60px">1548.951</div>
<div class="g gr" style="left:1432px;top:416px;width:60px">1530.845</div>
<div class="g gr" style="left:1432px;top:435px;width:60px">1513.202</div>
<div class="g gr" style="left:1432px;top:454px;width:60px">1495.971</div>
<div class="g gr" style="left:1432px;top:473px;width:60px">1479.163</div>
<div class="g gr" style="left:1432px;top:492px;width:60px">1462.344</div>
<div class="g gr" style="left:1432px;top:511px;width:60px">1446.345</div>
<div class="g gr" style="left:1432px;top:530px;width:60px">1429.913</div>
<div class="g gr" style="left:1432px;top:549px;width:60px">1414.334</div>
<div class="g gr" style="left:1432px;top:568px;width:60px">1398.717</div>
<div class="g gr" style="left:1432px;top:587px;width:60px">1383.521</div>
<div class="g gr" style="left:1432px;top:606px;width:60px">1368.323</div>
<div class="g gr" style="left:1432px;top:625px;width:60px">1353.523</div>
<div class="g gr" style="left:1432px;top:644px;width:60px">1339.132</div>
<div class="g gr" style="left:1432px;top:663px;width:60px">1324.735</div>
<div class="g gr" style="left:1432px;top:682px;width:60px">1310.756</div>
<div class="g gr" style="left:1432px;top:701px;width:60px">1296.749</div>
<div class="g gr" style="left:1432px;top:720px;width:60px">1283.172</div>
<div class="g gr" style="left:1432px;top:739px;width:60px">1270.004</div>
<div class="g gr" style="left:1432px;top:758px;width:60px">1256.798</div>
<div class="g gr" style="left:1432px;top:777px;width:60px">1243.604</div>
<div class="g gl" style="left:1493px;top:226px;width:60px;overflow:visible"><span style="display:inline-block;transform:scaleX(0.95);transform-origin:0 0">F1L_Fy</span></div>
<div class="g gr" style="left:1493px;top:245px;width:60px">0.785412</div>
<div class="g gr" style="left:1493px;top:264px;width:60px">0.785321</div>
<div class="g gr" style="left:1493px;top:283px;width:60px">318.0516</div>
<div class="g gr" style="left:1493px;top:302px;width:60px">-262.716</div>
<div class="g gr" style="left:1493px;top:321px;width:60px">-405.178</div>
<div class="g gr" style="left:1493px;top:340px;width:60px">-494.975</div>
<div class="g gr" style="left:1493px;top:359px;width:60px">-569.47</div>
<div class="g gr" style="left:1493px;top:378px;width:60px">-639.292</div>
<div class="g gr" style="left:1493px;top:397px;width:60px">-704.517</div>
<div class="g gr" style="left:1493px;top:416px;width:60px">-765.888</div>
<div class="g gr" style="left:1493px;top:435px;width:60px">-821.062</div>
<div class="g gr" style="left:1493px;top:454px;width:60px">-869.611</div>
<div class="g gr" style="left:1493px;top:473px;width:60px">-912.234</div>
<div class="g gr" style="left:1493px;top:492px;width:60px">-949.948</div>
<div class="g gr" style="left:1493px;top:511px;width:60px">-983.472</div>
<div class="g gr" style="left:1493px;top:530px;width:60px">-1015.42</div>
<div class="g gr" style="left:1493px;top:549px;width:60px">-1044.63</div>
<div class="g gr" style="left:1493px;top:568px;width:60px">-1073.59</div>
<div class="g gr" style="left:1493px;top:587px;width:60px">-1101.51</div>
<div class="g gr" style="left:1493px;top:606px;width:60px">-1130.07</div>
<div class="g gr" style="left:1493px;top:625px;width:60px">-1157.52</div>
<div class="g gr" style="left:1493px;top:644px;width:60px">-1185.81</div>
<div class="g gr" style="left:1493px;top:663px;width:60px">-1213.46</div>
<div class="g gr" style="left:1493px;top:682px;width:60px">-1241</div>
<div class="g gr" style="left:1493px;top:701px;width:60px">-1267.68</div>
<div class="g gr" style="left:1493px;top:720px;width:60px">-1293.65</div>
<div class="g gr" style="left:1493px;top:739px;width:60px">-1320.24</div>
<div class="g gr" style="left:1493px;top:758px;width:60px">-1344.82</div>
<div class="g gr" style="left:1493px;top:777px;width:60px">-1368.71</div>
<div class="g gl" style="left:1554px;top:226px;width:60px;overflow:visible"><span style="display:inline-block;transform:scaleX(0.95);transform-origin:0 0">F1L_Fz</span></div>
<div class="g gr" style="left:1554px;top:245px;width:60px">6043.488</div>
<div class="g gr" style="left:1554px;top:264px;width:60px">6043.071</div>
<div class="g gr" style="left:1554px;top:283px;width:60px">6042.729</div>
<div class="g gr" style="left:1554px;top:302px;width:60px">6001.864</div>
<div class="g gr" style="left:1554px;top:321px;width:60px">5776.764</div>
<div class="g gr" style="left:1554px;top:340px;width:60px">5717.672</div>
<div class="g gr" style="left:1554px;top:359px;width:60px">5690.334</div>
<div class="g gr" style="left:1554px;top:378px;width:60px">5679.368</div>
<div class="g gr" style="left:1554px;top:397px;width:60px">5676.899</div>
<div class="g gr" style="left:1554px;top:416px;width:60px">5679.652</div>
<div class="g gr" style="left:1554px;top:435px;width:60px">5683.671</div>
<div class="g gr" style="left:1554px;top:454px;width:60px">5688.411</div>
<div class="g gr" style="left:1554px;top:473px;width:60px">5693.614</div>
<div class="g gr" style="left:1554px;top:492px;width:60px">5699.454</div>
<div class="g gr" style="left:1554px;top:511px;width:60px">5706.154</div>
<div class="g gr" style="left:1554px;top:530px;width:60px">5714.433</div>
<div class="g gr" style="left:1554px;top:549px;width:60px">5722.979</div>
<div class="g gr" style="left:1554px;top:568px;width:60px">5733.432</div>
<div class="g gr" style="left:1554px;top:587px;width:60px">5744.356</div>
<div class="g gr" style="left:1554px;top:606px;width:60px">5756.257</div>
<div class="g gr" style="left:1554px;top:625px;width:60px">5768.222</div>
<div class="g gr" style="left:1554px;top:644px;width:60px">5780.188</div>
<div class="g gr" style="left:1554px;top:663px;width:60px">5791.154</div>
<div class="g gr" style="left:1554px;top:682px;width:60px">5801.479</div>
<div class="g gr" style="left:1554px;top:701px;width:60px">5810.447</div>
<div class="g gr" style="left:1554px;top:720px;width:60px">5818.019</div>
<div class="g gr" style="left:1554px;top:739px;width:60px">5824.581</div>
<div class="g gr" style="left:1554px;top:758px;width:60px">5829.038</div>
<div class="g gr" style="left:1554px;top:777px;width:60px">5832.348</div>
<div class="g gl" style="left:1615px;top:226px;width:60px;overflow:visible"><span style="display:inline-block;transform:scaleX(0.95);transform-origin:0 0">F1L_Td</span></div>
<div class="g gr" style="left:1615px;top:245px;width:60px">0</div>
<div class="g gr" style="left:1615px;top:264px;width:60px">545.9072</div>
<div class="g gr" style="left:1615px;top:283px;width:60px">545.9072</div>
<div class="g gr" style="left:1615px;top:302px;width:60px">545.9072</div>
<div class="g gr" style="left:1615px;top:321px;width:60px">539.7432</div>
<div class="g gr" style="left:1615px;top:340px;width:60px">534.5173</div>
<div class="g gr" style="left:1615px;top:359px;width:60px">528.6214</div>
<div class="g gr" style="left:1615px;top:378px;width:60px">522.5915</div>
<div class="g gr" style="left:1615px;top:397px;width:60px">516.6956</div>
<div class="g gr" style="left:1615px;top:416px;width:60px">510.6657</div>
<div class="g gr" style="left:1615px;top:435px;width:60px">504.7698</div>
<div class="g gr" style="left:1615px;top:454px;width:60px">499.0079</div>
<div class="g gr" style="left:1615px;top:473px;width:60px">493.38</div>
<div class="g gr" style="left:1615px;top:492px;width:60px">487.7521</div>
<div class="g gr" style="left:1615px;top:511px;width:60px">482.3922</div>
<div class="g gr" style="left:1615px;top:530px;width:60px">476.8983</div>
<div class="g gr" style="left:1615px;top:549px;width:60px">471.6723</div>
<div class="g gr" style="left:1615px;top:568px;width:60px">466.4464</div>
<div class="g gr" style="left:1615px;top:587px;width:60px">461.3545</div>
<div class="g gr" style="left:1615px;top:606px;width:60px">456.2626</div>
<div class="g gr" style="left:1615px;top:625px;width:60px">451.3047</div>
<div class="g gr" style="left:1615px;top:644px;width:60px">446.4807</div>
<div class="g gr" style="left:1615px;top:663px;width:60px">441.6568</div>
<div class="g gr" style="left:1615px;top:682px;width:60px">436.9669</div>
<div class="g gr" style="left:1615px;top:701px;width:60px">432.277</div>
<div class="g gr" style="left:1615px;top:720px;width:60px">427.7211</div>
<div class="g gr" style="left:1615px;top:739px;width:60px">423.2991</div>
<div class="g gr" style="left:1615px;top:758px;width:60px">418.8772</div>
<div class="g gr" style="left:1615px;top:777px;width:60px">414.4553</div>
<div class="g gl" style="left:1676px;top:226px;width:60px;overflow:visible"><span style="display:inline-block;transform:scaleX(0.95);transform-origin:0 0">F1L_Tb</span></div>
<div class="g gr" style="left:1676px;top:245px;width:60px">2275</div>
<div class="g gr" style="left:1676px;top:264px;width:60px">0</div>
<div class="g gr" style="left:1676px;top:283px;width:60px">0</div>
<div class="g gr" style="left:1676px;top:302px;width:60px">0</div>
<div class="g gr" style="left:1676px;top:321px;width:60px">0</div>
<div class="g gr" style="left:1676px;top:340px;width:60px">0</div>
<div class="g gr" style="left:1676px;top:359px;width:60px">0</div>
<div class="g gr" style="left:1676px;top:378px;width:60px">0</div>
<div class="g gr" style="left:1676px;top:397px;width:60px">0</div>
<div class="g gr" style="left:1676px;top:416px;width:60px">0</div>
<div class="g gr" style="left:1676px;top:435px;width:60px">0</div>
<div class="g gr" style="left:1676px;top:454px;width:60px">0</div>
<div class="g gr" style="left:1676px;top:473px;width:60px">0</div>
<div class="g gr" style="left:1676px;top:492px;width:60px">0</div>
<div class="g gr" style="left:1676px;top:511px;width:60px">0</div>
<div class="g gr" style="left:1676px;top:530px;width:60px">0</div>
<div class="g gr" style="left:1676px;top:549px;width:60px">0</div>
<div class="g gr" style="left:1676px;top:568px;width:60px">0</div>
<div class="g gr" style="left:1676px;top:587px;width:60px">0</div>
<div class="g gr" style="left:1676px;top:606px;width:60px">0</div>
<div class="g gr" style="left:1676px;top:625px;width:60px">0</div>
<div class="g gr" style="left:1676px;top:644px;width:60px">0</div>
<div class="g gr" style="left:1676px;top:663px;width:60px">0</div>
<div class="g gr" style="left:1676px;top:682px;width:60px">0</div>
<div class="g gr" style="left:1676px;top:701px;width:60px">0</div>
<div class="g gr" style="left:1676px;top:720px;width:60px">0</div>
<div class="g gr" style="left:1676px;top:739px;width:60px">0</div>
<div class="g gr" style="left:1676px;top:758px;width:60px">0</div>
<div class="g gr" style="left:1676px;top:777px;width:60px">0</div>
<div class="g gl" style="left:1737px;top:226px;width:60px;overflow:visible"><span style="display:inline-block;transform:scaleX(0.95);transform-origin:0 0">F1L_Tr</span></div>
<div class="g gr" style="left:1737px;top:245px;width:60px">0</div>
<div class="g gr" style="left:1737px;top:264px;width:60px">-545.907</div>
<div class="g gr" style="left:1737px;top:283px;width:60px">-540.477</div>
<div class="g gr" style="left:1737px;top:302px;width:60px">-538.722</div>
<div class="g gr" style="left:1737px;top:321px;width:60px">-534.227</div>
<div class="g gr" style="left:1737px;top:340px;width:60px">-528.96</div>
<div class="g gr" style="left:1737px;top:359px;width:60px">-523.025</div>
<div class="g gr" style="left:1737px;top:378px;width:60px">-517.003</div>
<div class="g gr" style="left:1737px;top:397px;width:60px">-511.154</div>
<div class="g gr" style="left:1737px;top:416px;width:60px">-505.179</div>
<div class="g gr" style="left:1737px;top:435px;width:60px">-499.357</div>
<div class="g gr" style="left:1737px;top:454px;width:60px">-493.671</div>
<div class="g gr" style="left:1737px;top:473px;width:60px">-488.124</div>
<div class="g gr" style="left:1737px;top:492px;width:60px">-482.574</div>
<div class="g gr" style="left:1737px;top:511px;width:60px">-477.294</div>
<div class="g gr" style="left:1737px;top:530px;width:60px">-471.871</div>
<div class="g gr" style="left:1737px;top:549px;width:60px">-466.73</div>
<div class="g gr" style="left:1737px;top:568px;width:60px">-461.577</div>
<div class="g gr" style="left:1737px;top:587px;width:60px">-456.562</div>
<div class="g gr" style="left:1737px;top:606px;width:60px">-451.547</div>
<div class="g gr" style="left:1737px;top:625px;width:60px">-446.663</div>
<div class="g gr" style="left:1737px;top:644px;width:60px">-441.914</div>
<div class="g gr" style="left:1737px;top:663px;width:60px">-437.163</div>
<div class="g gr" style="left:1737px;top:682px;width:60px">-432.549</div>
<div class="g gr" style="left:1737px;top:701px;width:60px">-427.927</div>
<div class="g gr" style="left:1737px;top:720px;width:60px">-423.447</div>
<div class="g gr" style="left:1737px;top:739px;width:60px">-419.101</div>
<div class="g gr" style="left:1737px;top:758px;width:60px">-414.743</div>
<div class="g gr" style="left:1737px;top:777px;width:60px">-410.389</div></body></html>
